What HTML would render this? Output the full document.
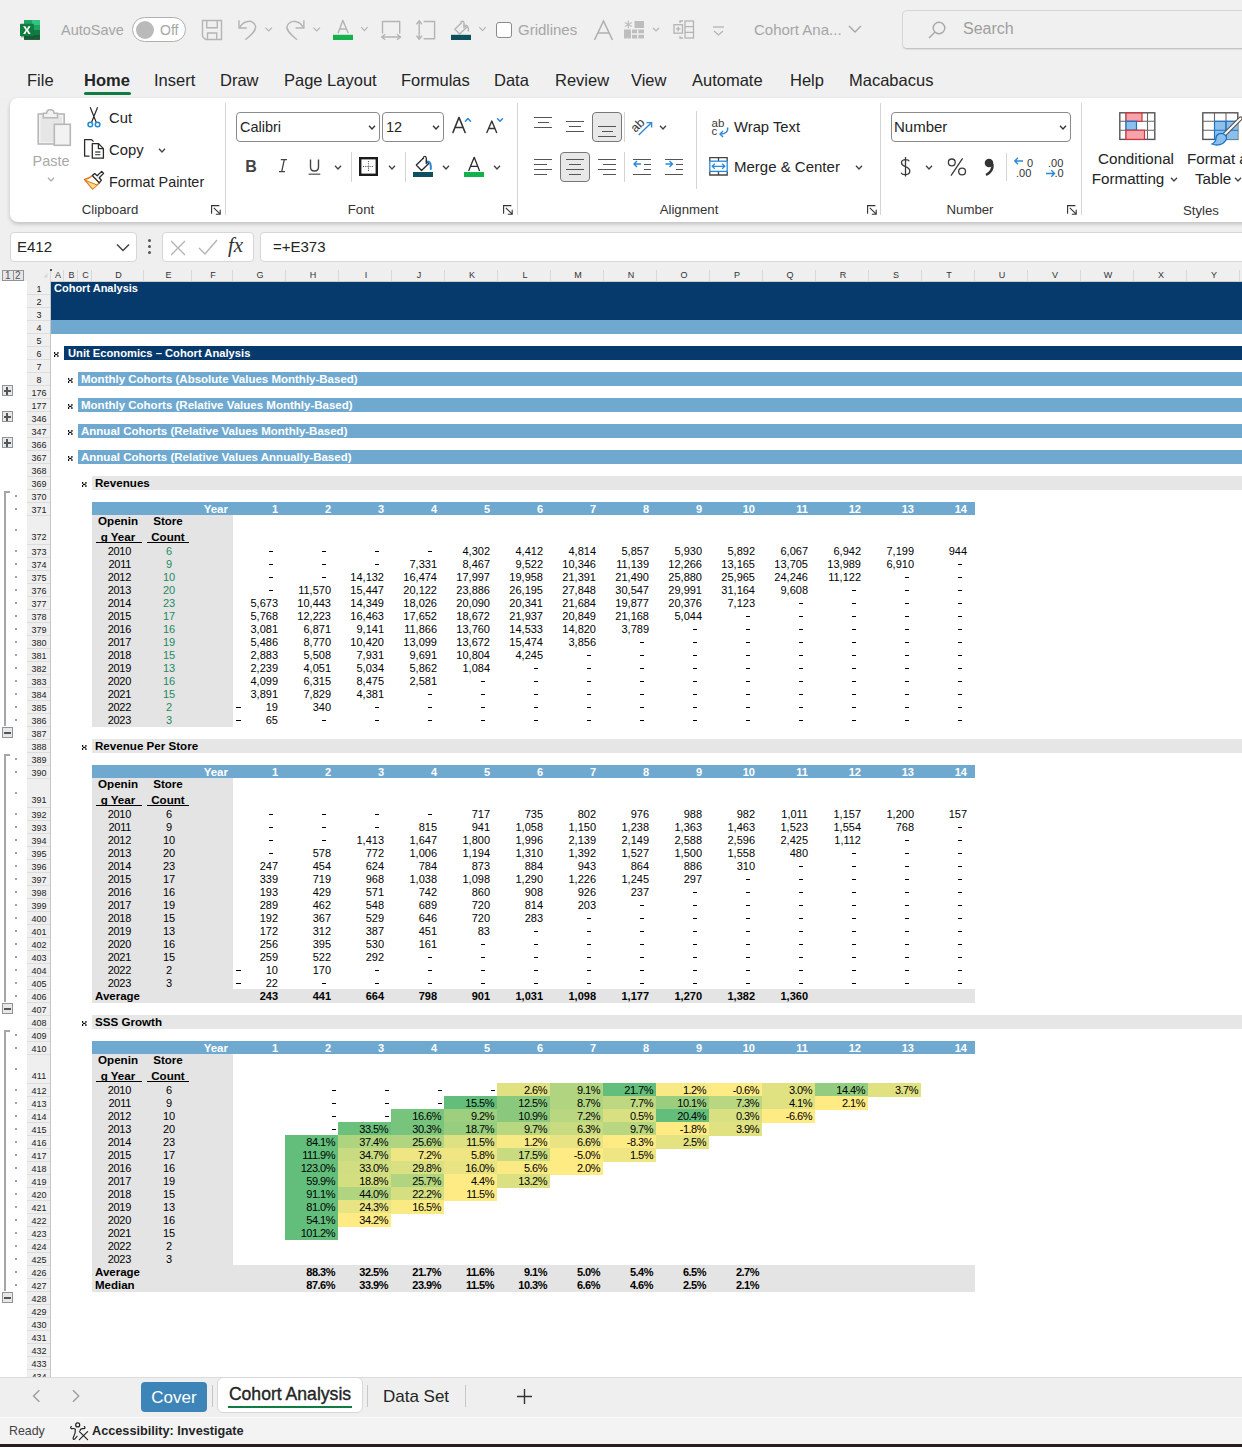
<!DOCTYPE html><html><head><meta charset="utf-8"><style>
html,body{margin:0;padding:0;}
body{width:1242px;height:1447px;overflow:hidden;position:relative;background:#efefef;font-family:"Liberation Sans", sans-serif;}
.t{position:absolute;white-space:nowrap;}
svg{position:absolute;overflow:visible;}
</style></head><body>
<div style="position:absolute;left:0px;top:0px;width:1242px;height:98px;background:#f0f0f0;"></div>
<svg style="left:15px;top:15px" width="30" height="30" viewBox="0 0 30 30">
<rect x="9" y="5" width="16" height="19.8" rx="1" fill="#185c37"/>
<rect x="9" y="5" width="16" height="15" fill="#21a366"/>
<rect x="17" y="5" width="8" height="5" fill="#33c481"/>
<rect x="17" y="15" width="8" height="5" fill="#107c41"/>
<rect x="9" y="20" width="16" height="4.8" fill="#185c37"/>
<rect x="6" y="9.5" width="13" height="13" fill="#0a4d2a" opacity="0.35"/>
<rect x="5" y="8.8" width="13.7" height="12.5" rx="0.8" fill="#107c41"/>
<path d="M8.1 11.2 H10.4 L11.9 14.1 L13.4 11.2 H15.6 L13.1 15.05 L15.6 18.9 H13.4 L11.9 16 L10.4 18.9 H8.1 L10.7 15.05 Z" fill="#fff"/>
</svg>
<div class="t" style="left:61px;top:21px;font-size:14.5px;font-weight:400;color:#a6a6a6;line-height:18px;">AutoSave</div>
<div style="position:absolute;left:132px;top:17px;width:54px;height:25px;border:1px solid #b0b0b0;border-radius:13px;background:#fff;box-sizing:border-box"></div>
<div style="position:absolute;left:136px;top:21px;width:17.5px;height:17.5px;border-radius:9px;background:#bababa"></div>
<div class="t" style="left:160px;top:22px;font-size:14px;font-weight:400;color:#a6a6a6;line-height:17px;">Off</div>
<svg style="left:195px;top:14px" width="130" height="32" viewBox="195 14 130 32" fill="none" stroke="#b4b4b4" stroke-width="1.4">
<path d="M202.5 20.5 H221.5 V39.5 H205.5 L202.5 36.5 Z"/><path d="M206.7 20.5 V27.8 H217.3 V20.5"/><path d="M207.5 39.5 V33 H216.7 V39.5"/>
<path d="M239 20.3 V28 H246.8"/><path d="M239.6 27.6 C243 21 252 18.5 255.3 25.5 C257 30 252 34.5 245.3 39.7"/>
<path d="M265.4 27.6 L268.7 30.9 L272 27.6" stroke-width="1.2"/>
<path d="M303.9 20.3 V28 H295.6"/><path d="M303.3 27.6 C300 21 291 18.5 287.2 25.8 C285.5 30 290.5 34.5 297.1 39.7"/>
<path d="M313.4 27.6 L316.7 30.9 L320 27.6" stroke-width="1.2"/></svg>
<svg style="left:325px;top:14px" width="170" height="32" viewBox="325 14 170 32" fill="none" stroke="#b4b4b4" stroke-width="1.4" stroke-linejoin="round">
<path d="M338 33.2 L342.8 20.4 L348.3 33.2 M339.6 29 H346.7"/><rect x="333" y="34.8" width="20" height="5.2" fill="#13b04b" stroke="none"/>
<path d="M361.2 27.2 L364.4 30.6 L367.6 27.2" stroke-width="1.2"/>
<path d="M382.5 33.5 V21.5 H399.7 V33.5"/><path d="M381.6 37 H400.6 M385.2 34.2 L381.6 37 L385.2 39.8 M397 34.2 L400.6 37 L397 39.8"/>
<path d="M423.6 21.5 H434.6 V38.7 H423.6"/><path d="M419.2 20.8 V39.2 M416.4 24.4 L419.2 20.8 L422 24.4 M416.4 35.6 L419.2 39.2 L422 35.6"/>
<path d="M460.8 23.4 L454.8 29.3 L459.8 34 L466.4 27.6 L464.2 25.5" stroke-linecap="round"/>
<path d="M460.8 23.4 C460.8 20.6 464 20.6 464 23.4 V27.8" stroke-linecap="round"/>
<path d="M465.8 25.2 C467.8 25.6 468.6 28 468.5 31" stroke-linecap="round"/>
<rect x="451" y="34.8" width="20" height="5.2" fill="#0d4f5c" stroke="none"/>
<path d="M479.3 27.2 L482.5 30.6 L485.7 27.2" stroke-width="1.2"/></svg>
<div style="position:absolute;left:496px;top:22px;width:16px;height:16px;border:1px solid #8a8a8a;border-radius:3px;background:#fff;box-sizing:border-box"></div>
<div class="t" style="left:518px;top:21px;font-size:15px;font-weight:400;color:#a6a6a6;line-height:18px;">Gridlines</div>
<svg style="left:593px;top:20px" width="21" height="21" viewBox="0 0 21 21" fill="none" stroke="#b0b0b0" stroke-width="1.6"><path d="M1.5 20 L10.5 1 L19.5 20 M5 13 H16"/></svg>
<svg style="left:624px;top:20px" width="40" height="20" viewBox="0 0 40 20">
<rect x="0" y="9.5" width="7" height="9" fill="#bdbdbd"/>
<rect x="10.5" y="1" width="9.5" height="7" fill="#bdbdbd"/>
<rect x="8" y="9.5" width="12" height="9" fill="#bdbdbd"/>
<path d="M13.7 9.5 V18.5 M8 14 H20" stroke="#efefef" stroke-width="1.3"/>
<path d="M4.3 0.5 V8.5 M0.8 2.5 L7.8 6.5 M7.8 2.5 L0.8 6.5" stroke="#bdbdbd" stroke-width="1.2"/>
<path d="M29 8 L32 11 L35 8" stroke="#b4b4b4" fill="none" stroke-width="1.2"/></svg>
<svg style="left:673px;top:20px" width="22" height="20" viewBox="0 0 22 20" fill="none" stroke="#b4b4b4" stroke-width="1.3">
<rect x="12" y="1" width="8.5" height="17"/><path d="M12 6.7 H20.5 M12 12.3 H20.5"/><path d="M10 1 H7 V3 M10 18 H7 V16"/>
<rect x="1" y="4.7" width="8.5" height="8.5"/><path d="M5.25 6.7 V11.2 M3 8.95 H7.5"/></svg>
<svg style="left:712px;top:25px" width="14" height="12" viewBox="0 0 14 12" fill="none" stroke="#b4b4b4" stroke-width="1.3">
<path d="M1 2 H12"/><path d="M2 6 L6.5 10 L11 6"/></svg>
<div class="t" style="left:754px;top:21px;font-size:15px;font-weight:400;color:#a6a6a6;line-height:18px;">Cohort Ana...</div>
<svg style="left:848px;top:24px" width="14" height="10" viewBox="0 0 14 10" fill="none" stroke="#a6a6a6" stroke-width="1.4"><path d="M1 2 L7 8 L13 2"/></svg>
<div style="position:absolute;left:902px;top:10px;width:400px;height:39px;border:1px solid #d6d6d6;border-bottom-color:#c4c4c4;border-radius:5px;background:#f0f0f0;box-sizing:border-box;box-shadow:0 1px 1px rgba(0,0,0,0.08)"></div>
<svg style="left:928px;top:21px" width="18" height="18" viewBox="0 0 18 18" fill="none" stroke="#a8a8a8" stroke-width="1.4">
<circle cx="11" cy="7" r="5.8"/><path d="M7 11 L1 17"/></svg>
<div class="t" style="left:963px;top:19px;font-size:16px;font-weight:400;color:#9e9e9e;line-height:20px;">Search</div>
<div class="t" style="left:27px;top:70px;font-size:16.5px;font-weight:400;color:#242424;line-height:20px;">File</div>
<div class="t" style="left:84px;top:70px;font-size:16.5px;font-weight:700;color:#242424;line-height:20px;">Home</div>
<div class="t" style="left:154px;top:70px;font-size:16.5px;font-weight:400;color:#242424;line-height:20px;">Insert</div>
<div class="t" style="left:220px;top:70px;font-size:16.5px;font-weight:400;color:#242424;line-height:20px;">Draw</div>
<div class="t" style="left:284px;top:70px;font-size:16.5px;font-weight:400;color:#242424;line-height:20px;">Page Layout</div>
<div class="t" style="left:401px;top:70px;font-size:16.5px;font-weight:400;color:#242424;line-height:20px;">Formulas</div>
<div class="t" style="left:494px;top:70px;font-size:16.5px;font-weight:400;color:#242424;line-height:20px;">Data</div>
<div class="t" style="left:555px;top:70px;font-size:16.5px;font-weight:400;color:#242424;line-height:20px;">Review</div>
<div class="t" style="left:631px;top:70px;font-size:16.5px;font-weight:400;color:#242424;line-height:20px;">View</div>
<div class="t" style="left:692px;top:70px;font-size:16.5px;font-weight:400;color:#242424;line-height:20px;">Automate</div>
<div class="t" style="left:790px;top:70px;font-size:16.5px;font-weight:400;color:#242424;line-height:20px;">Help</div>
<div class="t" style="left:849px;top:70px;font-size:16.5px;font-weight:400;color:#242424;line-height:20px;">Macabacus</div>
<div style="position:absolute;left:84px;top:92px;width:47px;height:3px;background:#107c41;border-radius:2px"></div>
<div style="position:absolute;left:10px;top:98px;width:1300px;height:124px;background:#fff;border-radius:8px;box-shadow:0 2px 4px rgba(0,0,0,0.2)"></div>
<svg style="left:30px;top:103px" width="45" height="46" viewBox="30 103 45 46" fill="none" stroke="#b8b8b8" stroke-width="1.6">
<rect x="38.2" y="114" width="26" height="30" fill="#f2f2f2"/>
<rect x="40.5" y="116.5" width="21.5" height="25.5" fill="#e6e6e6" stroke="none"/>
<path d="M43.3 117.8 V113.2 H46.6 C46.6 108.6 54 108.6 54 113.2 H57.5 V117.8 Z" fill="#f2f2f2"/>
<rect x="54.3" y="124.3" width="16" height="21" fill="#f2f2f2"/></svg>
<div class="t" style="left:-99px;width:300px;text-align:center;top:152px;font-size:14.4px;font-weight:400;color:#a8a8a8;line-height:18px;">Paste</div>
<svg style="left:47.0px;top:177px" width="8" height="5" viewBox="0 0 8 5" fill="none" stroke="#b0b0b0" stroke-width="1.3"><path d="M1 0.8 L4 4 L7 0.8"/></svg>
<svg style="left:84px;top:104px" width="20" height="26" viewBox="84 104 20 26" fill="none">
<path d="M90.2 107.2 L96.3 122.5 M97.6 107.2 L91.5 122.5" stroke="#2a2a2a" stroke-width="1.2"/>
<circle cx="90.3" cy="124.5" r="2.3" stroke="#1f87d6" stroke-width="1.5" fill="#fff"/>
<circle cx="97.6" cy="124.5" r="2.3" stroke="#1f87d6" stroke-width="1.5" fill="#fff"/></svg>
<div class="t" style="left:109px;top:109px;font-size:14.8px;font-weight:400;color:#242424;line-height:18px;">Cut</div>
<svg style="left:80px;top:135px" width="30" height="28" viewBox="80 135 30 28" fill="none" stroke="#2a2a2a" stroke-width="1.3" stroke-linejoin="round">
<path d="M89.5 156.2 H84.6 V139.6 H91.5 L93.5 141.6"/>
<path d="M92.3 143.6 H98.6 L103.4 148.6 V158.2 H92.3 Z" fill="#fff"/>
<path d="M98.4 143.8 V148.6 H103.2"/><path d="M95.2 152 H100.4 M95.2 154.6 H100.4" stroke="#555"/></svg>
<div class="t" style="left:109px;top:141px;font-size:14.8px;font-weight:400;color:#242424;line-height:18px;">Copy</div>
<svg style="left:158.0px;top:148px" width="8" height="5" viewBox="0 0 8 5" fill="none" stroke="#424242" stroke-width="1.3"><path d="M1 0.8 L4 4 L7 0.8"/></svg>
<svg style="left:80px;top:168px" width="30" height="24" viewBox="80 168 30 24" fill="none" stroke-linejoin="round">
<path d="M84.5 179.5 C88 179 90.5 177.5 92.4 175.6 L99.3 182.8 C97 185 94.5 187.5 92.6 189 Z" fill="#fff" stroke="#e07a1f" stroke-width="1.4"/>
<path d="M87 181.6 L96.8 185.4 L92.6 188.6 Z" fill="#f9dc84" stroke="none"/>
<path d="M85.6 180.5 L97 185" stroke="#e07a1f" stroke-width="1.2"/>
<path d="M92.4 175.6 L94.6 173.6 L97.2 175.8 L101.7 171.4 L103.6 173.4 L99.2 177.8 L101.4 180.2 L99.3 182.8 Z" fill="#fff" stroke="#2a2a2a" stroke-width="1.3"/></svg>
<div class="t" style="left:109px;top:173px;font-size:14.4px;font-weight:400;color:#242424;line-height:18px;">Format Painter</div>
<div class="t" style="left:-40px;width:300px;text-align:center;top:201px;font-size:13.2px;font-weight:400;color:#333;line-height:17px;">Clipboard</div>
<svg style="left:211px;top:205px" width="10" height="10" viewBox="0 0 10 10" fill="none" stroke="#333" stroke-width="1.1"><path d="M0.6 8.8 V0.6 H8.4"/><path d="M2.8 2.8 L9.2 9.2 M9.2 4.8 V9.2 H4.8"/></svg>
<div style="position:absolute;left:225px;top:103px;width:1px;height:112px;background:#d4d4d4;"></div>
<div style="position:absolute;left:236px;top:112px;width:144px;height:30px;border:1px solid #8a8a8a;border-radius:4px;box-sizing:border-box;background:#fff"></div>
<div class="t" style="left:240px;top:118px;font-size:14.5px;font-weight:400;color:#242424;line-height:18px;">Calibri</div>
<svg style="left:368.0px;top:125px" width="8" height="5" viewBox="0 0 8 5" fill="none" stroke="#333" stroke-width="1.3"><path d="M1 0.8 L4 4 L7 0.8"/></svg>
<div style="position:absolute;left:382px;top:112px;width:62px;height:30px;border:1px solid #8a8a8a;border-radius:4px;box-sizing:border-box;background:#fff"></div>
<div class="t" style="left:386px;top:118px;font-size:14.5px;font-weight:400;color:#242424;line-height:18px;">12</div>
<svg style="left:432.0px;top:125px" width="8" height="5" viewBox="0 0 8 5" fill="none" stroke="#333" stroke-width="1.3"><path d="M1 0.8 L4 4 L7 0.8"/></svg>
<svg style="left:445px;top:108px" width="65" height="32" viewBox="445 108 65 32" fill="none" stroke-linecap="round" stroke-linejoin="round">
<path d="M452.9 132.6 L459 117.4 L465.2 132.6 M455.5 127.6 H462.8" stroke="#333" stroke-width="1.5"/>
<path d="M465.4 121.3 L467.9 118.6 L470.5 121.3" stroke="#2b88d8" stroke-width="1.5"/>
<path d="M486.9 132.6 L491.8 121.1 L496.6 132.6 M488.8 128.5 H494.8" stroke="#333" stroke-width="1.4"/>
<path d="M497.6 118.7 L500 121.2 L502.5 118.7" stroke="#2b88d8" stroke-width="1.5"/></svg>
<div class="t" style="left:101px;width:300px;text-align:center;top:157px;font-size:16px;font-weight:700;color:#444;line-height:19px;">B</div>
<svg style="left:270px;top:150px" width="60" height="30" viewBox="270 150 60 30" fill="none" stroke="#444">
<path d="M280.8 159.6 H287 M279 171.6 H285 M284.3 159.6 L281.7 171.6" stroke-width="1.3"/>
<path d="M310.5 159.5 V167 C310.5 172.3 318.5 172.3 318.5 167 V159.5" stroke-width="1.4"/>
<path d="M308.6 174.2 H320.3" stroke="#666" stroke-width="1.4"/></svg>
<svg style="left:334.0px;top:165px" width="8" height="5" viewBox="0 0 8 5" fill="none" stroke="#424242" stroke-width="1.3"><path d="M1 0.8 L4 4 L7 0.8"/></svg>
<div style="position:absolute;left:351px;top:152px;width:1px;height:30px;background:#d4d4d4;"></div>
<svg style="left:359px;top:157px" width="19" height="19" viewBox="0 0 19 19" fill="none">
<rect x="1.2" y="1.2" width="16.6" height="16.6" stroke="#1a1a1a" stroke-width="2.4"/>
<path d="M9.5 4 V15 M4 9.5 H15" stroke="#555" stroke-width="1.1" stroke-dasharray="1.1 1.1"/></svg>
<svg style="left:388.0px;top:165px" width="8" height="5" viewBox="0 0 8 5" fill="none" stroke="#424242" stroke-width="1.3"><path d="M1 0.8 L4 4 L7 0.8"/></svg>
<div style="position:absolute;left:405px;top:152px;width:1px;height:30px;background:#d4d4d4;"></div>
<svg style="left:405px;top:150px" width="90" height="30" viewBox="405 150 90 30" fill="none" stroke-linejoin="round" stroke-linecap="round">
<path d="M423.3 158.3 L416.3 165 L421.5 170.5 L428.8 163.5 L426.3 161" stroke="#2a2a2a" stroke-width="1.3" fill="#fff"/>
<path d="M423.3 158.3 C423.3 155.8 426.3 155.8 426.3 158.3 L426.3 163.6" stroke="#2a2a2a" stroke-width="1.3"/>
<path d="M428 161.6 C430.3 161.6 431 164.5 430.8 169" stroke="#2b88d8" stroke-width="2"/>
<rect x="413" y="172" width="20" height="5" fill="#0c5062" stroke="none"/>
<path d="M468.8 170.5 L474.2 157.3 L479.4 170.5 M470.6 166.3 H477.6" stroke="#2a2a2a" stroke-width="1.3"/>
<rect x="464" y="172" width="20" height="5" fill="#12b14c" stroke="none"/></svg>
<svg style="left:442.0px;top:165px" width="8" height="5" viewBox="0 0 8 5" fill="none" stroke="#424242" stroke-width="1.3"><path d="M1 0.8 L4 4 L7 0.8"/></svg>
<svg style="left:493.0px;top:165px" width="8" height="5" viewBox="0 0 8 5" fill="none" stroke="#424242" stroke-width="1.3"><path d="M1 0.8 L4 4 L7 0.8"/></svg>
<div class="t" style="left:211px;width:300px;text-align:center;top:201px;font-size:13.2px;font-weight:400;color:#333;line-height:17px;">Font</div>
<svg style="left:503px;top:205px" width="10" height="10" viewBox="0 0 10 10" fill="none" stroke="#333" stroke-width="1.1"><path d="M0.6 8.8 V0.6 H8.4"/><path d="M2.8 2.8 L9.2 9.2 M9.2 4.8 V9.2 H4.8"/></svg>
<div style="position:absolute;left:517px;top:103px;width:1px;height:112px;background:#d4d4d4;"></div>
<div style="position:absolute;left:534px;top:117px;width:18px;height:1.4px;background:#555"></div>
<div style="position:absolute;left:537.5px;top:122px;width:11.5px;height:1.4px;background:#555"></div>
<div style="position:absolute;left:534px;top:127px;width:18px;height:1.4px;background:#555"></div>
<div style="position:absolute;left:566px;top:121px;width:18px;height:1.4px;background:#555"></div>
<div style="position:absolute;left:569px;top:126px;width:12px;height:1.4px;background:#555"></div>
<div style="position:absolute;left:566px;top:131px;width:18px;height:1.4px;background:#555"></div>
<div style="position:absolute;left:592px;top:112px;width:30px;height:30px;border:1px solid #777;border-radius:4px;background:#e8e8e8;box-sizing:border-box"></div>
<div style="position:absolute;left:598px;top:126px;width:18px;height:1.4px;background:#555"></div>
<div style="position:absolute;left:601.5px;top:131px;width:11.5px;height:1.4px;background:#555"></div>
<div style="position:absolute;left:598px;top:136px;width:18px;height:1.4px;background:#555"></div>
<div style="position:absolute;left:624px;top:112px;width:1px;height:30px;background:#d4d4d4;"></div>
<svg style="left:625px;top:108px" width="35" height="32" viewBox="625 108 35 32" fill="none">
<text x="631" y="130" font-size="12.5" font-family="Liberation Sans" fill="#3a3a3a" transform="rotate(-45 637 126)">ab</text>
<path d="M638.7 135 L651.4 122.8 M646.6 122.6 H651.6 V127.6" stroke="#2b88d8" stroke-width="1.4"/></svg>
<svg style="left:659.0px;top:125px" width="8" height="5" viewBox="0 0 8 5" fill="none" stroke="#424242" stroke-width="1.3"><path d="M1 0.8 L4 4 L7 0.8"/></svg>
<div style="position:absolute;left:696px;top:111px;width:1px;height:78px;background:#d4d4d4;"></div>
<svg style="left:705px;top:108px" width="30" height="32" viewBox="705 108 30 32" fill="none">
<text x="711.5" y="126.5" font-size="11.5" font-family="Liberation Sans" fill="#3a3a3a">ab</text>
<text x="711.5" y="135" font-size="11.5" font-family="Liberation Sans" fill="#3a3a3a">c</text>
<path d="M727.5 127.5 C728.5 131.5 725.5 134 720.5 134" stroke="#2b88d8" stroke-width="1.4"/>
<path d="M723 131 L720 134 L723 137" stroke="#2b88d8" stroke-width="1.4"/></svg>
<div class="t" style="left:734px;top:118px;font-size:14.8px;font-weight:400;color:#242424;line-height:18px;">Wrap Text</div>
<div style="position:absolute;left:534px;top:158.5px;width:18px;height:1.4px;background:#555"></div>
<div style="position:absolute;left:534px;top:163.5px;width:13px;height:1.4px;background:#555"></div>
<div style="position:absolute;left:534px;top:168.5px;width:18px;height:1.4px;background:#555"></div>
<div style="position:absolute;left:534px;top:173.5px;width:13px;height:1.4px;background:#555"></div>
<div style="position:absolute;left:560px;top:152px;width:30px;height:30px;border:1px solid #777;border-radius:4px;background:#e8e8e8;box-sizing:border-box"></div>
<div style="position:absolute;left:566px;top:158.5px;width:18px;height:1.4px;background:#555"></div>
<div style="position:absolute;left:569px;top:163.5px;width:12px;height:1.4px;background:#555"></div>
<div style="position:absolute;left:566px;top:168.5px;width:18px;height:1.4px;background:#555"></div>
<div style="position:absolute;left:569px;top:173.5px;width:12px;height:1.4px;background:#555"></div>
<div style="position:absolute;left:598px;top:158.5px;width:18px;height:1.4px;background:#555"></div>
<div style="position:absolute;left:603px;top:163.5px;width:13px;height:1.4px;background:#555"></div>
<div style="position:absolute;left:598px;top:168.5px;width:18px;height:1.4px;background:#555"></div>
<div style="position:absolute;left:603px;top:173.5px;width:13px;height:1.4px;background:#555"></div>
<div style="position:absolute;left:624px;top:152px;width:1px;height:30px;background:#d4d4d4;"></div>
<div style="position:absolute;left:633px;top:158.5px;width:18px;height:1.4px;background:#555"></div>
<div style="position:absolute;left:643.5px;top:163.5px;width:7.5px;height:1.4px;background:#555"></div>
<div style="position:absolute;left:643.5px;top:168.5px;width:7.5px;height:1.4px;background:#555"></div>
<div style="position:absolute;left:633px;top:173.5px;width:18px;height:1.4px;background:#555"></div>
<svg style="left:633px;top:160px" width="10" height="8" viewBox="0 0 10 8" fill="none" stroke="#2b88d8" stroke-width="1.4"><path d="M8 4 H1 M4 1 L1 4 L4 7"/></svg>
<div style="position:absolute;left:665px;top:158.5px;width:18px;height:1.4px;background:#555"></div>
<div style="position:absolute;left:675.5px;top:163.5px;width:7.5px;height:1.4px;background:#555"></div>
<div style="position:absolute;left:675.5px;top:168.5px;width:7.5px;height:1.4px;background:#555"></div>
<div style="position:absolute;left:665px;top:173.5px;width:18px;height:1.4px;background:#555"></div>
<svg style="left:665px;top:160px" width="10" height="8" viewBox="0 0 10 8" fill="none" stroke="#2b88d8" stroke-width="1.4"><path d="M0.5 4 H7.5 M4.5 1 L7.5 4 L4.5 7"/></svg>
<svg style="left:700px;top:150px" width="35" height="32" viewBox="700 150 35 32" fill="none">
<path d="M709.8 161 V157.7 H727.2 V161 M709.8 171.5 V175 H727.2 V171.5 M718.5 157.7 V161 M718.5 171.5 V175" stroke="#444" stroke-width="1.3"/>
<rect x="709.8" y="161.2" width="17.4" height="10.2" fill="#fff" stroke="#2b88d8" stroke-width="1.3"/>
<path d="M712.2 166.3 H724.8 M714.8 163.8 L712.2 166.3 L714.8 168.8 M722.2 163.8 L724.8 166.3 L722.2 168.8" stroke="#2b88d8" stroke-width="1.3"/></svg>
<div class="t" style="left:734px;top:158px;font-size:15px;font-weight:400;color:#242424;line-height:18px;">Merge &amp; Center</div>
<svg style="left:855.0px;top:165px" width="8" height="5" viewBox="0 0 8 5" fill="none" stroke="#424242" stroke-width="1.3"><path d="M1 0.8 L4 4 L7 0.8"/></svg>
<div class="t" style="left:539px;width:300px;text-align:center;top:201px;font-size:13.2px;font-weight:400;color:#333;line-height:17px;">Alignment</div>
<svg style="left:867px;top:205px" width="10" height="10" viewBox="0 0 10 10" fill="none" stroke="#333" stroke-width="1.1"><path d="M0.6 8.8 V0.6 H8.4"/><path d="M2.8 2.8 L9.2 9.2 M9.2 4.8 V9.2 H4.8"/></svg>
<div style="position:absolute;left:880px;top:103px;width:1px;height:112px;background:#d4d4d4;"></div>
<div style="position:absolute;left:891px;top:112px;width:180px;height:30px;border:1px solid #8a8a8a;border-radius:4px;box-sizing:border-box;background:#fff"></div>
<div class="t" style="left:894px;top:118px;font-size:15px;font-weight:400;color:#242424;line-height:18px;">Number</div>
<svg style="left:1059.0px;top:125px" width="8" height="5" viewBox="0 0 8 5" fill="none" stroke="#333" stroke-width="1.3"><path d="M1 0.8 L4 4 L7 0.8"/></svg>
<svg style="left:890px;top:150px" width="90" height="30" viewBox="890 150 90 30" fill="none" stroke="#3a3a3a" stroke-width="1.3">
<path d="M909.3 161.3 C908 159 901.5 158.8 901.5 163 C901.5 167.2 909.8 166 909.8 171 C909.8 175.5 902.5 175.5 901 172.8 M905.5 157 V176.6"/>
<circle cx="951.8" cy="162.4" r="3.4"/><circle cx="962.1" cy="171.5" r="3.4"/><path d="M962.6 158.4 L951 175.7"/></svg>
<svg style="left:925.0px;top:165px" width="8" height="5" viewBox="0 0 8 5" fill="none" stroke="#424242" stroke-width="1.3"><path d="M1 0.8 L4 4 L7 0.8"/></svg>
<svg style="left:984px;top:158px" width="11" height="18" viewBox="0 0 11 18"><circle cx="5" cy="5" r="4.3" fill="#333"/><path d="M8.5 6 C9 11 6 15 2 17" stroke="#333" stroke-width="2.4" fill="none"/></svg>
<div style="position:absolute;left:1006px;top:153px;width:1px;height:28px;background:#d4d4d4;"></div>
<svg style="left:1013px;top:156px" width="22" height="22" viewBox="0 0 22 22" fill="none">
<path d="M10 5 H1.8 M5 1.8 L1.8 5 L5 8.2" stroke="#2b88d8" stroke-width="1.4"/>
<text x="14" y="10.5" font-size="11" font-family="Liberation Sans" fill="#333">0</text>
<text x="3" y="20.5" font-size="11" font-family="Liberation Sans" fill="#333">.00</text></svg>
<svg style="left:1045px;top:156px" width="22" height="22" viewBox="0 0 22 22" fill="none">
<text x="3" y="10.5" font-size="11" font-family="Liberation Sans" fill="#333">.00</text>
<path d="M1 17.5 H9.5 M6.3 14.3 L9.5 17.5 L6.3 20.7" stroke="#2b88d8" stroke-width="1.4"/>
<text x="9.5" y="20.5" font-size="11" font-family="Liberation Sans" fill="#333">.0</text></svg>
<div class="t" style="left:820px;width:300px;text-align:center;top:201px;font-size:13.2px;font-weight:400;color:#333;line-height:17px;">Number</div>
<svg style="left:1067px;top:205px" width="10" height="10" viewBox="0 0 10 10" fill="none" stroke="#333" stroke-width="1.1"><path d="M0.6 8.8 V0.6 H8.4"/><path d="M2.8 2.8 L9.2 9.2 M9.2 4.8 V9.2 H4.8"/></svg>
<div style="position:absolute;left:1081px;top:103px;width:1px;height:112px;background:#d4d4d4;"></div>
<svg style="left:1119px;top:112px" width="37" height="29" viewBox="0 0 37 29" fill="none">
<rect x="0.8" y="0.8" width="35" height="26.6" fill="#fff" stroke="#555" stroke-width="1.4"/>
<path d="M7 1 V27.5 M28.5 1 V27.5 M1 9.3 H36 M1 18.2 H36" stroke="#666" stroke-width="1.1"/>
<rect x="7" y="1" width="16" height="8.3" fill="#f6a3ab" stroke="#d13438" stroke-width="1.2"/>
<rect x="7" y="9.3" width="10.5" height="8.9" fill="#8cc0ec" stroke="#1a73c8" stroke-width="1.2"/>
<rect x="7" y="18.2" width="18.5" height="9.2" fill="#f6a3ab" stroke="#d13438" stroke-width="1.2"/></svg>
<div class="t" style="left:986px;width:300px;text-align:center;top:150px;font-size:15.2px;font-weight:400;color:#242424;line-height:18px;">Conditional</div>
<div class="t" style="left:978px;width:300px;text-align:center;top:170px;font-size:15.2px;font-weight:400;color:#242424;line-height:18px;">Formatting</div>
<svg style="left:1170.0px;top:177px" width="8" height="5" viewBox="0 0 8 5" fill="none" stroke="#424242" stroke-width="1.3"><path d="M1 0.8 L4 4 L7 0.8"/></svg>
<svg style="left:1202px;top:112px" width="42" height="36" viewBox="0 0 42 36" fill="none">
<rect x="0.8" y="0.8" width="35" height="26.6" fill="#fff" stroke="#555" stroke-width="1.4"/>
<rect x="12.5" y="9.3" width="23.3" height="18.1" fill="#8cc0ec"/>
<path d="M12.5 1 V27.5 M24 1 V27.5 M1 9.3 H36 M1 18.2 H12.5" stroke="#666" stroke-width="1.1"/>
<path d="M12.5 9.3 V27.5 M24 9.3 V27.5 M12.5 18.2 H36 M12.5 9.3 H36" stroke="#1a73c8" stroke-width="1.1"/>
<path d="M38.5 6.5 L21 24" stroke="#555" stroke-width="4.2" stroke-linecap="round"/>
<path d="M38.5 6.5 L21 24" stroke="#fff" stroke-width="2" stroke-linecap="round"/>
<path d="M22.5 22.5 C19 20 14 22 14 26 C14 29 12 31 10 32 C15 34 21 33 24 28 C25 26 24.5 24 22.5 22.5 Z" fill="#8cc0ec" stroke="#1a73c8" stroke-width="1.3"/></svg>
<div class="t" style="left:1187px;top:150px;font-size:15.2px;font-weight:400;color:#242424;line-height:18px;">Format a</div>
<div class="t" style="left:1195px;top:170px;font-size:15.2px;font-weight:400;color:#242424;line-height:18px;">Table</div>
<svg style="left:1234.0px;top:177px" width="8" height="5" viewBox="0 0 8 5" fill="none" stroke="#424242" stroke-width="1.3"><path d="M1 0.8 L4 4 L7 0.8"/></svg>
<div class="t" style="left:1051px;width:300px;text-align:center;top:202px;font-size:13.2px;font-weight:400;color:#333;line-height:17px;">Styles</div>
<div style="position:absolute;left:10px;top:232px;width:127px;height:30px;border:1px solid #d6d6d6;border-radius:4px;background:#fff;box-sizing:border-box"></div>
<div class="t" style="left:17px;top:237px;font-size:15px;font-weight:400;color:#242424;line-height:19px;">E412</div>
<svg style="left:116px;top:243px" width="14" height="9" viewBox="0 0 14 9" fill="none" stroke="#424242" stroke-width="1.5"><path d="M1 1.5 L7 7.5 L13 1.5"/></svg>
<div style="position:absolute;left:148px;top:239px;width:3px;height:3px;background:#555;border-radius:2px"></div>
<div style="position:absolute;left:148px;top:245px;width:3px;height:3px;background:#555;border-radius:2px"></div>
<div style="position:absolute;left:148px;top:251px;width:3px;height:3px;background:#555;border-radius:2px"></div>
<div style="position:absolute;left:162px;top:232px;width:92px;height:30px;border:1px solid #d6d6d6;border-radius:4px;background:#fff;box-sizing:border-box"></div>
<svg style="left:170px;top:240px" width="16" height="16" viewBox="0 0 16 16" fill="none" stroke="#b4b4b4" stroke-width="1.4"><path d="M1 1 L15 15 M15 1 L1 15"/></svg>
<svg style="left:198px;top:239px" width="20" height="16" viewBox="0 0 20 16" fill="none" stroke="#b4b4b4" stroke-width="1.4"><path d="M1 9 L7 15 L19 1"/></svg>
<div class="t" style="left:228px;top:233px;font-size:21px;font-weight:400;color:#333;line-height:24px;font-family:'Liberation Serif',serif;font-style:italic">fx</div>
<div style="position:absolute;left:260px;top:232px;width:1000px;height:30px;border:1px solid #d6d6d6;border-radius:4px;background:#fff;box-sizing:border-box"></div>
<div class="t" style="left:273px;top:237px;font-size:15px;font-weight:400;color:#242424;line-height:19px;">=+E373</div>
<div style="position:absolute;left:0px;top:281px;width:1242px;height:1096px;background:#ffffff;"></div>
<div style="position:absolute;left:0px;top:262px;width:1242px;height:19px;background:#efefef;"></div>
<div style="position:absolute;left:27px;top:281px;width:1215px;height:1px;background:#d4d4d4;"></div>
<div style="position:absolute;left:27px;top:281px;width:23px;height:1096px;background:#efefef;"></div>
<div style="position:absolute;left:50px;top:270px;width:1px;height:1107px;background:#c6c6c6;"></div>
<div style="position:absolute;left:50px;top:270px;width:1px;height:11px;background:#d9d9d9;"></div>
<div class="t" style="left:-92.0px;width:300px;text-align:center;top:270px;font-size:9px;font-weight:400;color:#333;line-height:10px;">A</div>
<div style="position:absolute;left:63px;top:270px;width:1px;height:11px;background:#d9d9d9;"></div>
<div class="t" style="left:-78.5px;width:300px;text-align:center;top:270px;font-size:9px;font-weight:400;color:#333;line-height:10px;">B</div>
<div style="position:absolute;left:77px;top:270px;width:1px;height:11px;background:#d9d9d9;"></div>
<div class="t" style="left:-64.5px;width:300px;text-align:center;top:270px;font-size:9px;font-weight:400;color:#333;line-height:10px;">C</div>
<div style="position:absolute;left:91px;top:270px;width:1px;height:11px;background:#d9d9d9;"></div>
<div class="t" style="left:-31.5px;width:300px;text-align:center;top:270px;font-size:9px;font-weight:400;color:#333;line-height:10px;">D</div>
<div style="position:absolute;left:143px;top:270px;width:1px;height:11px;background:#d9d9d9;"></div>
<div class="t" style="left:18.5px;width:300px;text-align:center;top:270px;font-size:9px;font-weight:400;color:#333;line-height:10px;">E</div>
<div style="position:absolute;left:191px;top:270px;width:1px;height:11px;background:#d9d9d9;"></div>
<div class="t" style="left:63.0px;width:300px;text-align:center;top:270px;font-size:9px;font-weight:400;color:#333;line-height:10px;">F</div>
<div style="position:absolute;left:232px;top:270px;width:1px;height:11px;background:#d9d9d9;"></div>
<div class="t" style="left:110.0px;width:300px;text-align:center;top:270px;font-size:9px;font-weight:400;color:#333;line-height:10px;">G</div>
<div style="position:absolute;left:285px;top:270px;width:1px;height:11px;background:#d9d9d9;"></div>
<div class="t" style="left:163.0px;width:300px;text-align:center;top:270px;font-size:9px;font-weight:400;color:#333;line-height:10px;">H</div>
<div style="position:absolute;left:338px;top:270px;width:1px;height:11px;background:#d9d9d9;"></div>
<div class="t" style="left:216.0px;width:300px;text-align:center;top:270px;font-size:9px;font-weight:400;color:#333;line-height:10px;">I</div>
<div style="position:absolute;left:391px;top:270px;width:1px;height:11px;background:#d9d9d9;"></div>
<div class="t" style="left:269.0px;width:300px;text-align:center;top:270px;font-size:9px;font-weight:400;color:#333;line-height:10px;">J</div>
<div style="position:absolute;left:444px;top:270px;width:1px;height:11px;background:#d9d9d9;"></div>
<div class="t" style="left:322.0px;width:300px;text-align:center;top:270px;font-size:9px;font-weight:400;color:#333;line-height:10px;">K</div>
<div style="position:absolute;left:497px;top:270px;width:1px;height:11px;background:#d9d9d9;"></div>
<div class="t" style="left:375.0px;width:300px;text-align:center;top:270px;font-size:9px;font-weight:400;color:#333;line-height:10px;">L</div>
<div style="position:absolute;left:550px;top:270px;width:1px;height:11px;background:#d9d9d9;"></div>
<div class="t" style="left:428.0px;width:300px;text-align:center;top:270px;font-size:9px;font-weight:400;color:#333;line-height:10px;">M</div>
<div style="position:absolute;left:603px;top:270px;width:1px;height:11px;background:#d9d9d9;"></div>
<div class="t" style="left:481.0px;width:300px;text-align:center;top:270px;font-size:9px;font-weight:400;color:#333;line-height:10px;">N</div>
<div style="position:absolute;left:656px;top:270px;width:1px;height:11px;background:#d9d9d9;"></div>
<div class="t" style="left:534.0px;width:300px;text-align:center;top:270px;font-size:9px;font-weight:400;color:#333;line-height:10px;">O</div>
<div style="position:absolute;left:709px;top:270px;width:1px;height:11px;background:#d9d9d9;"></div>
<div class="t" style="left:587.0px;width:300px;text-align:center;top:270px;font-size:9px;font-weight:400;color:#333;line-height:10px;">P</div>
<div style="position:absolute;left:762px;top:270px;width:1px;height:11px;background:#d9d9d9;"></div>
<div class="t" style="left:640.0px;width:300px;text-align:center;top:270px;font-size:9px;font-weight:400;color:#333;line-height:10px;">Q</div>
<div style="position:absolute;left:815px;top:270px;width:1px;height:11px;background:#d9d9d9;"></div>
<div class="t" style="left:693.0px;width:300px;text-align:center;top:270px;font-size:9px;font-weight:400;color:#333;line-height:10px;">R</div>
<div style="position:absolute;left:868px;top:270px;width:1px;height:11px;background:#d9d9d9;"></div>
<div class="t" style="left:746.0px;width:300px;text-align:center;top:270px;font-size:9px;font-weight:400;color:#333;line-height:10px;">S</div>
<div style="position:absolute;left:921px;top:270px;width:1px;height:11px;background:#d9d9d9;"></div>
<div class="t" style="left:799.0px;width:300px;text-align:center;top:270px;font-size:9px;font-weight:400;color:#333;line-height:10px;">T</div>
<div style="position:absolute;left:974px;top:270px;width:1px;height:11px;background:#d9d9d9;"></div>
<div class="t" style="left:852.0px;width:300px;text-align:center;top:270px;font-size:9px;font-weight:400;color:#333;line-height:10px;">U</div>
<div style="position:absolute;left:1027px;top:270px;width:1px;height:11px;background:#d9d9d9;"></div>
<div class="t" style="left:905.0px;width:300px;text-align:center;top:270px;font-size:9px;font-weight:400;color:#333;line-height:10px;">V</div>
<div style="position:absolute;left:1080px;top:270px;width:1px;height:11px;background:#d9d9d9;"></div>
<div class="t" style="left:958.0px;width:300px;text-align:center;top:270px;font-size:9px;font-weight:400;color:#333;line-height:10px;">W</div>
<div style="position:absolute;left:1133px;top:270px;width:1px;height:11px;background:#d9d9d9;"></div>
<div class="t" style="left:1011.0px;width:300px;text-align:center;top:270px;font-size:9px;font-weight:400;color:#333;line-height:10px;">X</div>
<div style="position:absolute;left:1186px;top:270px;width:1px;height:11px;background:#d9d9d9;"></div>
<div class="t" style="left:1064.0px;width:300px;text-align:center;top:270px;font-size:9px;font-weight:400;color:#333;line-height:10px;">Y</div>
<div style="position:absolute;left:1239px;top:270px;width:1px;height:11px;background:#d9d9d9;"></div>
<div class="t" style="left:1117.0px;width:300px;text-align:center;top:270px;font-size:9px;font-weight:400;color:#333;line-height:10px;">Z</div>
<svg style="left:43px;top:273px" width="5" height="5"><path d="M4.5 0 L4.5 4.5 L0 4.5 Z" fill="#d8d8d8"/></svg>
<div style="position:absolute;left:50px;top:269px;width:2px;height:2px;background:#222;border-radius:1px"></div>
<div style="position:absolute;left:2px;top:270px;width:20px;height:9px;border:1px solid #8d949a;background:#e6e6e6"></div>
<div style="position:absolute;left:13px;top:270px;width:1px;height:11px;background:#8d949a;"></div>
<div class="t" style="left:5px;top:270px;font-size:10px;font-weight:400;color:#555;line-height:11px;">1</div>
<div class="t" style="left:15px;top:270px;font-size:10px;font-weight:400;color:#555;line-height:11px;">2</div>
<div style="position:absolute;left:27px;top:294px;width:23px;height:1px;background:#dddddd;"></div>
<div class="t" style="left:-111px;width:300px;text-align:center;top:284px;font-size:9px;font-weight:400;color:#222;line-height:11px;">1</div>
<div style="position:absolute;left:27px;top:307px;width:23px;height:1px;background:#dddddd;"></div>
<div class="t" style="left:-111px;width:300px;text-align:center;top:297px;font-size:9px;font-weight:400;color:#222;line-height:11px;">2</div>
<div style="position:absolute;left:27px;top:320px;width:23px;height:1px;background:#dddddd;"></div>
<div class="t" style="left:-111px;width:300px;text-align:center;top:310px;font-size:9px;font-weight:400;color:#222;line-height:11px;">3</div>
<div style="position:absolute;left:27px;top:333px;width:23px;height:1px;background:#dddddd;"></div>
<div class="t" style="left:-111px;width:300px;text-align:center;top:323px;font-size:9px;font-weight:400;color:#222;line-height:11px;">4</div>
<div style="position:absolute;left:27px;top:346px;width:23px;height:1px;background:#dddddd;"></div>
<div class="t" style="left:-111px;width:300px;text-align:center;top:336px;font-size:9px;font-weight:400;color:#222;line-height:11px;">5</div>
<div style="position:absolute;left:27px;top:359px;width:23px;height:1px;background:#dddddd;"></div>
<div class="t" style="left:-111px;width:300px;text-align:center;top:349px;font-size:9px;font-weight:400;color:#222;line-height:11px;">6</div>
<div style="position:absolute;left:27px;top:372px;width:23px;height:1px;background:#dddddd;"></div>
<div class="t" style="left:-111px;width:300px;text-align:center;top:362px;font-size:9px;font-weight:400;color:#222;line-height:11px;">7</div>
<div style="position:absolute;left:27px;top:385px;width:23px;height:1px;background:#dddddd;"></div>
<div class="t" style="left:-111px;width:300px;text-align:center;top:375px;font-size:9px;font-weight:400;color:#222;line-height:11px;">8</div>
<div style="position:absolute;left:27px;top:398px;width:23px;height:1px;background:#dddddd;"></div>
<div class="t" style="left:-111px;width:300px;text-align:center;top:388px;font-size:9px;font-weight:400;color:#222;line-height:11px;">176</div>
<div style="position:absolute;left:27px;top:411px;width:23px;height:1px;background:#dddddd;"></div>
<div class="t" style="left:-111px;width:300px;text-align:center;top:401px;font-size:9px;font-weight:400;color:#222;line-height:11px;">177</div>
<div style="position:absolute;left:27px;top:424px;width:23px;height:1px;background:#dddddd;"></div>
<div class="t" style="left:-111px;width:300px;text-align:center;top:414px;font-size:9px;font-weight:400;color:#222;line-height:11px;">346</div>
<div style="position:absolute;left:27px;top:437px;width:23px;height:1px;background:#dddddd;"></div>
<div class="t" style="left:-111px;width:300px;text-align:center;top:427px;font-size:9px;font-weight:400;color:#222;line-height:11px;">347</div>
<div style="position:absolute;left:27px;top:450px;width:23px;height:1px;background:#dddddd;"></div>
<div class="t" style="left:-111px;width:300px;text-align:center;top:440px;font-size:9px;font-weight:400;color:#222;line-height:11px;">366</div>
<div style="position:absolute;left:27px;top:463px;width:23px;height:1px;background:#dddddd;"></div>
<div class="t" style="left:-111px;width:300px;text-align:center;top:453px;font-size:9px;font-weight:400;color:#222;line-height:11px;">367</div>
<div style="position:absolute;left:27px;top:476px;width:23px;height:1px;background:#dddddd;"></div>
<div class="t" style="left:-111px;width:300px;text-align:center;top:466px;font-size:9px;font-weight:400;color:#222;line-height:11px;">368</div>
<div style="position:absolute;left:27px;top:489px;width:23px;height:1px;background:#dddddd;"></div>
<div class="t" style="left:-111px;width:300px;text-align:center;top:479px;font-size:9px;font-weight:400;color:#222;line-height:11px;">369</div>
<div style="position:absolute;left:27px;top:502px;width:23px;height:1px;background:#dddddd;"></div>
<div class="t" style="left:-111px;width:300px;text-align:center;top:492px;font-size:9px;font-weight:400;color:#222;line-height:11px;">370</div>
<div style="position:absolute;left:27px;top:515px;width:23px;height:1px;background:#dddddd;"></div>
<div class="t" style="left:-111px;width:300px;text-align:center;top:505px;font-size:9px;font-weight:400;color:#222;line-height:11px;">371</div>
<div style="position:absolute;left:27px;top:544px;width:23px;height:1px;background:#dddddd;"></div>
<div class="t" style="left:-111px;width:300px;text-align:center;top:532px;font-size:9px;font-weight:400;color:#222;line-height:11px;">372</div>
<div style="position:absolute;left:27px;top:557px;width:23px;height:1px;background:#dddddd;"></div>
<div class="t" style="left:-111px;width:300px;text-align:center;top:547px;font-size:9px;font-weight:400;color:#222;line-height:11px;">373</div>
<div style="position:absolute;left:27px;top:570px;width:23px;height:1px;background:#dddddd;"></div>
<div class="t" style="left:-111px;width:300px;text-align:center;top:560px;font-size:9px;font-weight:400;color:#222;line-height:11px;">374</div>
<div style="position:absolute;left:27px;top:583px;width:23px;height:1px;background:#dddddd;"></div>
<div class="t" style="left:-111px;width:300px;text-align:center;top:573px;font-size:9px;font-weight:400;color:#222;line-height:11px;">375</div>
<div style="position:absolute;left:27px;top:596px;width:23px;height:1px;background:#dddddd;"></div>
<div class="t" style="left:-111px;width:300px;text-align:center;top:586px;font-size:9px;font-weight:400;color:#222;line-height:11px;">376</div>
<div style="position:absolute;left:27px;top:609px;width:23px;height:1px;background:#dddddd;"></div>
<div class="t" style="left:-111px;width:300px;text-align:center;top:599px;font-size:9px;font-weight:400;color:#222;line-height:11px;">377</div>
<div style="position:absolute;left:27px;top:622px;width:23px;height:1px;background:#dddddd;"></div>
<div class="t" style="left:-111px;width:300px;text-align:center;top:612px;font-size:9px;font-weight:400;color:#222;line-height:11px;">378</div>
<div style="position:absolute;left:27px;top:635px;width:23px;height:1px;background:#dddddd;"></div>
<div class="t" style="left:-111px;width:300px;text-align:center;top:625px;font-size:9px;font-weight:400;color:#222;line-height:11px;">379</div>
<div style="position:absolute;left:27px;top:648px;width:23px;height:1px;background:#dddddd;"></div>
<div class="t" style="left:-111px;width:300px;text-align:center;top:638px;font-size:9px;font-weight:400;color:#222;line-height:11px;">380</div>
<div style="position:absolute;left:27px;top:661px;width:23px;height:1px;background:#dddddd;"></div>
<div class="t" style="left:-111px;width:300px;text-align:center;top:651px;font-size:9px;font-weight:400;color:#222;line-height:11px;">381</div>
<div style="position:absolute;left:27px;top:674px;width:23px;height:1px;background:#dddddd;"></div>
<div class="t" style="left:-111px;width:300px;text-align:center;top:664px;font-size:9px;font-weight:400;color:#222;line-height:11px;">382</div>
<div style="position:absolute;left:27px;top:687px;width:23px;height:1px;background:#dddddd;"></div>
<div class="t" style="left:-111px;width:300px;text-align:center;top:677px;font-size:9px;font-weight:400;color:#222;line-height:11px;">383</div>
<div style="position:absolute;left:27px;top:700px;width:23px;height:1px;background:#dddddd;"></div>
<div class="t" style="left:-111px;width:300px;text-align:center;top:690px;font-size:9px;font-weight:400;color:#222;line-height:11px;">384</div>
<div style="position:absolute;left:27px;top:713px;width:23px;height:1px;background:#dddddd;"></div>
<div class="t" style="left:-111px;width:300px;text-align:center;top:703px;font-size:9px;font-weight:400;color:#222;line-height:11px;">385</div>
<div style="position:absolute;left:27px;top:726px;width:23px;height:1px;background:#dddddd;"></div>
<div class="t" style="left:-111px;width:300px;text-align:center;top:716px;font-size:9px;font-weight:400;color:#222;line-height:11px;">386</div>
<div style="position:absolute;left:27px;top:739px;width:23px;height:1px;background:#dddddd;"></div>
<div class="t" style="left:-111px;width:300px;text-align:center;top:729px;font-size:9px;font-weight:400;color:#222;line-height:11px;">387</div>
<div style="position:absolute;left:27px;top:752px;width:23px;height:1px;background:#dddddd;"></div>
<div class="t" style="left:-111px;width:300px;text-align:center;top:742px;font-size:9px;font-weight:400;color:#222;line-height:11px;">388</div>
<div style="position:absolute;left:27px;top:765px;width:23px;height:1px;background:#dddddd;"></div>
<div class="t" style="left:-111px;width:300px;text-align:center;top:755px;font-size:9px;font-weight:400;color:#222;line-height:11px;">389</div>
<div style="position:absolute;left:27px;top:778px;width:23px;height:1px;background:#dddddd;"></div>
<div class="t" style="left:-111px;width:300px;text-align:center;top:768px;font-size:9px;font-weight:400;color:#222;line-height:11px;">390</div>
<div style="position:absolute;left:27px;top:807px;width:23px;height:1px;background:#dddddd;"></div>
<div class="t" style="left:-111px;width:300px;text-align:center;top:795px;font-size:9px;font-weight:400;color:#222;line-height:11px;">391</div>
<div style="position:absolute;left:27px;top:820px;width:23px;height:1px;background:#dddddd;"></div>
<div class="t" style="left:-111px;width:300px;text-align:center;top:810px;font-size:9px;font-weight:400;color:#222;line-height:11px;">392</div>
<div style="position:absolute;left:27px;top:833px;width:23px;height:1px;background:#dddddd;"></div>
<div class="t" style="left:-111px;width:300px;text-align:center;top:823px;font-size:9px;font-weight:400;color:#222;line-height:11px;">393</div>
<div style="position:absolute;left:27px;top:846px;width:23px;height:1px;background:#dddddd;"></div>
<div class="t" style="left:-111px;width:300px;text-align:center;top:836px;font-size:9px;font-weight:400;color:#222;line-height:11px;">394</div>
<div style="position:absolute;left:27px;top:859px;width:23px;height:1px;background:#dddddd;"></div>
<div class="t" style="left:-111px;width:300px;text-align:center;top:849px;font-size:9px;font-weight:400;color:#222;line-height:11px;">395</div>
<div style="position:absolute;left:27px;top:872px;width:23px;height:1px;background:#dddddd;"></div>
<div class="t" style="left:-111px;width:300px;text-align:center;top:862px;font-size:9px;font-weight:400;color:#222;line-height:11px;">396</div>
<div style="position:absolute;left:27px;top:885px;width:23px;height:1px;background:#dddddd;"></div>
<div class="t" style="left:-111px;width:300px;text-align:center;top:875px;font-size:9px;font-weight:400;color:#222;line-height:11px;">397</div>
<div style="position:absolute;left:27px;top:898px;width:23px;height:1px;background:#dddddd;"></div>
<div class="t" style="left:-111px;width:300px;text-align:center;top:888px;font-size:9px;font-weight:400;color:#222;line-height:11px;">398</div>
<div style="position:absolute;left:27px;top:911px;width:23px;height:1px;background:#dddddd;"></div>
<div class="t" style="left:-111px;width:300px;text-align:center;top:901px;font-size:9px;font-weight:400;color:#222;line-height:11px;">399</div>
<div style="position:absolute;left:27px;top:924px;width:23px;height:1px;background:#dddddd;"></div>
<div class="t" style="left:-111px;width:300px;text-align:center;top:914px;font-size:9px;font-weight:400;color:#222;line-height:11px;">400</div>
<div style="position:absolute;left:27px;top:937px;width:23px;height:1px;background:#dddddd;"></div>
<div class="t" style="left:-111px;width:300px;text-align:center;top:927px;font-size:9px;font-weight:400;color:#222;line-height:11px;">401</div>
<div style="position:absolute;left:27px;top:950px;width:23px;height:1px;background:#dddddd;"></div>
<div class="t" style="left:-111px;width:300px;text-align:center;top:940px;font-size:9px;font-weight:400;color:#222;line-height:11px;">402</div>
<div style="position:absolute;left:27px;top:963px;width:23px;height:1px;background:#dddddd;"></div>
<div class="t" style="left:-111px;width:300px;text-align:center;top:953px;font-size:9px;font-weight:400;color:#222;line-height:11px;">403</div>
<div style="position:absolute;left:27px;top:976px;width:23px;height:1px;background:#dddddd;"></div>
<div class="t" style="left:-111px;width:300px;text-align:center;top:966px;font-size:9px;font-weight:400;color:#222;line-height:11px;">404</div>
<div style="position:absolute;left:27px;top:989px;width:23px;height:1px;background:#dddddd;"></div>
<div class="t" style="left:-111px;width:300px;text-align:center;top:979px;font-size:9px;font-weight:400;color:#222;line-height:11px;">405</div>
<div style="position:absolute;left:27px;top:1002px;width:23px;height:1px;background:#dddddd;"></div>
<div class="t" style="left:-111px;width:300px;text-align:center;top:992px;font-size:9px;font-weight:400;color:#222;line-height:11px;">406</div>
<div style="position:absolute;left:27px;top:1015px;width:23px;height:1px;background:#dddddd;"></div>
<div class="t" style="left:-111px;width:300px;text-align:center;top:1005px;font-size:9px;font-weight:400;color:#222;line-height:11px;">407</div>
<div style="position:absolute;left:27px;top:1028px;width:23px;height:1px;background:#dddddd;"></div>
<div class="t" style="left:-111px;width:300px;text-align:center;top:1018px;font-size:9px;font-weight:400;color:#222;line-height:11px;">408</div>
<div style="position:absolute;left:27px;top:1041px;width:23px;height:1px;background:#dddddd;"></div>
<div class="t" style="left:-111px;width:300px;text-align:center;top:1031px;font-size:9px;font-weight:400;color:#222;line-height:11px;">409</div>
<div style="position:absolute;left:27px;top:1054px;width:23px;height:1px;background:#dddddd;"></div>
<div class="t" style="left:-111px;width:300px;text-align:center;top:1044px;font-size:9px;font-weight:400;color:#222;line-height:11px;">410</div>
<div style="position:absolute;left:27px;top:1083px;width:23px;height:1px;background:#dddddd;"></div>
<div class="t" style="left:-111px;width:300px;text-align:center;top:1071px;font-size:9px;font-weight:400;color:#222;line-height:11px;">411</div>
<div style="position:absolute;left:27px;top:1096px;width:23px;height:1px;background:#dddddd;"></div>
<div class="t" style="left:-111px;width:300px;text-align:center;top:1086px;font-size:9px;font-weight:400;color:#222;line-height:11px;">412</div>
<div style="position:absolute;left:27px;top:1109px;width:23px;height:1px;background:#dddddd;"></div>
<div class="t" style="left:-111px;width:300px;text-align:center;top:1099px;font-size:9px;font-weight:400;color:#222;line-height:11px;">413</div>
<div style="position:absolute;left:27px;top:1122px;width:23px;height:1px;background:#dddddd;"></div>
<div class="t" style="left:-111px;width:300px;text-align:center;top:1112px;font-size:9px;font-weight:400;color:#222;line-height:11px;">414</div>
<div style="position:absolute;left:27px;top:1135px;width:23px;height:1px;background:#dddddd;"></div>
<div class="t" style="left:-111px;width:300px;text-align:center;top:1125px;font-size:9px;font-weight:400;color:#222;line-height:11px;">415</div>
<div style="position:absolute;left:27px;top:1148px;width:23px;height:1px;background:#dddddd;"></div>
<div class="t" style="left:-111px;width:300px;text-align:center;top:1138px;font-size:9px;font-weight:400;color:#222;line-height:11px;">416</div>
<div style="position:absolute;left:27px;top:1161px;width:23px;height:1px;background:#dddddd;"></div>
<div class="t" style="left:-111px;width:300px;text-align:center;top:1151px;font-size:9px;font-weight:400;color:#222;line-height:11px;">417</div>
<div style="position:absolute;left:27px;top:1174px;width:23px;height:1px;background:#dddddd;"></div>
<div class="t" style="left:-111px;width:300px;text-align:center;top:1164px;font-size:9px;font-weight:400;color:#222;line-height:11px;">418</div>
<div style="position:absolute;left:27px;top:1187px;width:23px;height:1px;background:#dddddd;"></div>
<div class="t" style="left:-111px;width:300px;text-align:center;top:1177px;font-size:9px;font-weight:400;color:#222;line-height:11px;">419</div>
<div style="position:absolute;left:27px;top:1200px;width:23px;height:1px;background:#dddddd;"></div>
<div class="t" style="left:-111px;width:300px;text-align:center;top:1190px;font-size:9px;font-weight:400;color:#222;line-height:11px;">420</div>
<div style="position:absolute;left:27px;top:1213px;width:23px;height:1px;background:#dddddd;"></div>
<div class="t" style="left:-111px;width:300px;text-align:center;top:1203px;font-size:9px;font-weight:400;color:#222;line-height:11px;">421</div>
<div style="position:absolute;left:27px;top:1226px;width:23px;height:1px;background:#dddddd;"></div>
<div class="t" style="left:-111px;width:300px;text-align:center;top:1216px;font-size:9px;font-weight:400;color:#222;line-height:11px;">422</div>
<div style="position:absolute;left:27px;top:1239px;width:23px;height:1px;background:#dddddd;"></div>
<div class="t" style="left:-111px;width:300px;text-align:center;top:1229px;font-size:9px;font-weight:400;color:#222;line-height:11px;">423</div>
<div style="position:absolute;left:27px;top:1252px;width:23px;height:1px;background:#dddddd;"></div>
<div class="t" style="left:-111px;width:300px;text-align:center;top:1242px;font-size:9px;font-weight:400;color:#222;line-height:11px;">424</div>
<div style="position:absolute;left:27px;top:1265px;width:23px;height:1px;background:#dddddd;"></div>
<div class="t" style="left:-111px;width:300px;text-align:center;top:1255px;font-size:9px;font-weight:400;color:#222;line-height:11px;">425</div>
<div style="position:absolute;left:27px;top:1278px;width:23px;height:1px;background:#dddddd;"></div>
<div class="t" style="left:-111px;width:300px;text-align:center;top:1268px;font-size:9px;font-weight:400;color:#222;line-height:11px;">426</div>
<div style="position:absolute;left:27px;top:1291px;width:23px;height:1px;background:#dddddd;"></div>
<div class="t" style="left:-111px;width:300px;text-align:center;top:1281px;font-size:9px;font-weight:400;color:#222;line-height:11px;">427</div>
<div style="position:absolute;left:27px;top:1304px;width:23px;height:1px;background:#dddddd;"></div>
<div class="t" style="left:-111px;width:300px;text-align:center;top:1294px;font-size:9px;font-weight:400;color:#222;line-height:11px;">428</div>
<div style="position:absolute;left:27px;top:1317px;width:23px;height:1px;background:#dddddd;"></div>
<div class="t" style="left:-111px;width:300px;text-align:center;top:1307px;font-size:9px;font-weight:400;color:#222;line-height:11px;">429</div>
<div style="position:absolute;left:27px;top:1330px;width:23px;height:1px;background:#dddddd;"></div>
<div class="t" style="left:-111px;width:300px;text-align:center;top:1320px;font-size:9px;font-weight:400;color:#222;line-height:11px;">430</div>
<div style="position:absolute;left:27px;top:1343px;width:23px;height:1px;background:#dddddd;"></div>
<div class="t" style="left:-111px;width:300px;text-align:center;top:1333px;font-size:9px;font-weight:400;color:#222;line-height:11px;">431</div>
<div style="position:absolute;left:27px;top:1356px;width:23px;height:1px;background:#dddddd;"></div>
<div class="t" style="left:-111px;width:300px;text-align:center;top:1346px;font-size:9px;font-weight:400;color:#222;line-height:11px;">432</div>
<div style="position:absolute;left:27px;top:1369px;width:23px;height:1px;background:#dddddd;"></div>
<div class="t" style="left:-111px;width:300px;text-align:center;top:1359px;font-size:9px;font-weight:400;color:#222;line-height:11px;">433</div>
<div style="position:absolute;left:27px;top:1382px;width:23px;height:1px;background:#dddddd;"></div>
<div class="t" style="left:-111px;width:300px;text-align:center;top:1372px;font-size:9px;font-weight:400;color:#222;line-height:11px;">434</div>
<div style="position:absolute;left:51px;top:281px;width:1191px;height:39px;background:#073a6c;"></div>
<div class="t" style="left:54px;top:282px;font-size:11px;font-weight:700;color:#fff;line-height:12px;">Cohort Analysis</div>
<div style="position:absolute;left:51px;top:320px;width:1191px;height:14px;background:#6fa9d0;"></div>
<div style="position:absolute;left:51px;top:281px;width:1191px;height:1px;background:#d0cccc;"></div>
<div style="position:absolute;left:64px;top:346px;width:1178px;height:14px;background:#073a6c;"></div>
<div class="t" style="left:68px;top:347px;font-size:11.2px;font-weight:700;color:#fff;line-height:12px;">Unit Economics – Cohort Analysis</div>
<svg style="left:54px;top:352px" width="5" height="5" viewBox="0 0 5 5"><rect x="0" y="0" width="1.2" height="1.8" fill="#000"/><rect x="3.3" y="0" width="1.2" height="1.8" fill="#000"/><rect x="0.9" y="1.8" width="2.7" height="1.3" fill="#000"/><rect x="0" y="3.1" width="1.2" height="1.9" fill="#000"/><rect x="3.3" y="3.1" width="1.2" height="1.9" fill="#000"/></svg>
<div style="position:absolute;left:78px;top:372px;width:1164px;height:14px;background:#6fa9d0;"></div>
<div class="t" style="left:81px;top:373px;font-size:11.5px;font-weight:700;color:#fff;line-height:12px;">Monthly Cohorts (Absolute Values Monthly-Based)</div>
<svg style="left:68px;top:378px" width="5" height="5" viewBox="0 0 5 5"><rect x="0" y="0" width="1.2" height="1.8" fill="#000"/><rect x="3.3" y="0" width="1.2" height="1.8" fill="#000"/><rect x="0.9" y="1.8" width="2.7" height="1.3" fill="#000"/><rect x="0" y="3.1" width="1.2" height="1.9" fill="#000"/><rect x="3.3" y="3.1" width="1.2" height="1.9" fill="#000"/></svg>
<div style="position:absolute;left:78px;top:398px;width:1164px;height:14px;background:#6fa9d0;"></div>
<div class="t" style="left:81px;top:399px;font-size:11.5px;font-weight:700;color:#fff;line-height:12px;">Monthly Cohorts (Relative Values Monthly-Based)</div>
<svg style="left:68px;top:404px" width="5" height="5" viewBox="0 0 5 5"><rect x="0" y="0" width="1.2" height="1.8" fill="#000"/><rect x="3.3" y="0" width="1.2" height="1.8" fill="#000"/><rect x="0.9" y="1.8" width="2.7" height="1.3" fill="#000"/><rect x="0" y="3.1" width="1.2" height="1.9" fill="#000"/><rect x="3.3" y="3.1" width="1.2" height="1.9" fill="#000"/></svg>
<div style="position:absolute;left:78px;top:424px;width:1164px;height:14px;background:#6fa9d0;"></div>
<div class="t" style="left:81px;top:425px;font-size:11.5px;font-weight:700;color:#fff;line-height:12px;">Annual Cohorts (Relative Values Monthly-Based)</div>
<svg style="left:68px;top:430px" width="5" height="5" viewBox="0 0 5 5"><rect x="0" y="0" width="1.2" height="1.8" fill="#000"/><rect x="3.3" y="0" width="1.2" height="1.8" fill="#000"/><rect x="0.9" y="1.8" width="2.7" height="1.3" fill="#000"/><rect x="0" y="3.1" width="1.2" height="1.9" fill="#000"/><rect x="3.3" y="3.1" width="1.2" height="1.9" fill="#000"/></svg>
<div style="position:absolute;left:78px;top:450px;width:1164px;height:14px;background:#6fa9d0;"></div>
<div class="t" style="left:81px;top:451px;font-size:11.5px;font-weight:700;color:#fff;line-height:12px;">Annual Cohorts (Relative Values Annually-Based)</div>
<svg style="left:68px;top:456px" width="5" height="5" viewBox="0 0 5 5"><rect x="0" y="0" width="1.2" height="1.8" fill="#000"/><rect x="3.3" y="0" width="1.2" height="1.8" fill="#000"/><rect x="0.9" y="1.8" width="2.7" height="1.3" fill="#000"/><rect x="0" y="3.1" width="1.2" height="1.9" fill="#000"/><rect x="3.3" y="3.1" width="1.2" height="1.9" fill="#000"/></svg>
<div style="position:absolute;left:2px;top:385px;width:9px;height:9px;border:1px solid #8d949a;background:#e8e8e8"></div>
<div style="position:absolute;left:4px;top:390px;width:7px;height:2px;background:#555;"></div>
<div style="position:absolute;left:6px;top:387px;width:2px;height:8px;background:#555;"></div>
<div style="position:absolute;left:2px;top:411px;width:9px;height:9px;border:1px solid #8d949a;background:#e8e8e8"></div>
<div style="position:absolute;left:4px;top:416px;width:7px;height:2px;background:#555;"></div>
<div style="position:absolute;left:6px;top:413px;width:2px;height:8px;background:#555;"></div>
<div style="position:absolute;left:2px;top:437px;width:9px;height:9px;border:1px solid #8d949a;background:#e8e8e8"></div>
<div style="position:absolute;left:4px;top:442px;width:7px;height:2px;background:#555;"></div>
<div style="position:absolute;left:6px;top:439px;width:2px;height:8px;background:#555;"></div>
<div style="position:absolute;left:92px;top:476px;width:1150px;height:14px;background:#e6e6e6;"></div>
<div class="t" style="left:95px;top:477px;font-size:11.6px;font-weight:700;color:#000;line-height:12px;">Revenues</div>
<svg style="left:82px;top:482px" width="5" height="5" viewBox="0 0 5 5"><rect x="0" y="0" width="1.2" height="1.8" fill="#000"/><rect x="3.3" y="0" width="1.2" height="1.8" fill="#000"/><rect x="0.9" y="1.8" width="2.7" height="1.3" fill="#000"/><rect x="0" y="3.1" width="1.2" height="1.9" fill="#000"/><rect x="3.3" y="3.1" width="1.2" height="1.9" fill="#000"/></svg>
<div style="position:absolute;left:92px;top:502px;width:883px;height:13px;background:#6fa9d0;"></div>
<div class="t" style="right:1014px;top:503px;font-size:11.5px;font-weight:700;color:#fff;line-height:12px;">Year</div>
<div class="t" style="right:964px;top:503px;font-size:11px;font-weight:700;color:#fff;line-height:12px;">1</div>
<div class="t" style="right:911px;top:503px;font-size:11px;font-weight:700;color:#fff;line-height:12px;">2</div>
<div class="t" style="right:858px;top:503px;font-size:11px;font-weight:700;color:#fff;line-height:12px;">3</div>
<div class="t" style="right:805px;top:503px;font-size:11px;font-weight:700;color:#fff;line-height:12px;">4</div>
<div class="t" style="right:752px;top:503px;font-size:11px;font-weight:700;color:#fff;line-height:12px;">5</div>
<div class="t" style="right:699px;top:503px;font-size:11px;font-weight:700;color:#fff;line-height:12px;">6</div>
<div class="t" style="right:646px;top:503px;font-size:11px;font-weight:700;color:#fff;line-height:12px;">7</div>
<div class="t" style="right:593px;top:503px;font-size:11px;font-weight:700;color:#fff;line-height:12px;">8</div>
<div class="t" style="right:540px;top:503px;font-size:11px;font-weight:700;color:#fff;line-height:12px;">9</div>
<div class="t" style="right:487px;top:503px;font-size:11px;font-weight:700;color:#fff;line-height:12px;">10</div>
<div class="t" style="right:434px;top:503px;font-size:11px;font-weight:700;color:#fff;line-height:12px;">11</div>
<div class="t" style="right:381px;top:503px;font-size:11px;font-weight:700;color:#fff;line-height:12px;">12</div>
<div class="t" style="right:328px;top:503px;font-size:11px;font-weight:700;color:#fff;line-height:12px;">13</div>
<div class="t" style="right:275px;top:503px;font-size:11px;font-weight:700;color:#fff;line-height:12px;">14</div>
<div class="t" style="left:-32px;width:300px;text-align:center;top:514px;font-size:11.6px;font-weight:700;color:#000;line-height:14px;">Openin</div>
<div class="t" style="left:-32px;width:300px;text-align:center;top:530px;font-size:11.6px;font-weight:700;color:#000;line-height:13px;">g Year</div>
<div class="t" style="left:18px;width:300px;text-align:center;top:514px;font-size:11.6px;font-weight:700;color:#000;line-height:14px;">Store</div>
<div class="t" style="left:18px;width:300px;text-align:center;top:530px;font-size:11.6px;font-weight:700;color:#000;line-height:13px;">Count</div>
<div style="position:absolute;left:96px;top:542px;width:46px;height:1px;background:#000;"></div>
<div style="position:absolute;left:147px;top:542px;width:42px;height:1px;background:#000;"></div>
<div style="position:absolute;left:92px;top:515px;width:141px;height:212px;background:#e4e4e4;"></div>
<div style="position:absolute;left:92px;top:502px;width:883px;height:13px;background:#6fa9d0;"></div>
<div class="t" style="right:1014px;top:503px;font-size:11.5px;font-weight:700;color:#fff;line-height:12px;">Year</div>
<div class="t" style="right:964px;top:503px;font-size:11px;font-weight:700;color:#fff;line-height:12px;">1</div>
<div class="t" style="right:911px;top:503px;font-size:11px;font-weight:700;color:#fff;line-height:12px;">2</div>
<div class="t" style="right:858px;top:503px;font-size:11px;font-weight:700;color:#fff;line-height:12px;">3</div>
<div class="t" style="right:805px;top:503px;font-size:11px;font-weight:700;color:#fff;line-height:12px;">4</div>
<div class="t" style="right:752px;top:503px;font-size:11px;font-weight:700;color:#fff;line-height:12px;">5</div>
<div class="t" style="right:699px;top:503px;font-size:11px;font-weight:700;color:#fff;line-height:12px;">6</div>
<div class="t" style="right:646px;top:503px;font-size:11px;font-weight:700;color:#fff;line-height:12px;">7</div>
<div class="t" style="right:593px;top:503px;font-size:11px;font-weight:700;color:#fff;line-height:12px;">8</div>
<div class="t" style="right:540px;top:503px;font-size:11px;font-weight:700;color:#fff;line-height:12px;">9</div>
<div class="t" style="right:487px;top:503px;font-size:11px;font-weight:700;color:#fff;line-height:12px;">10</div>
<div class="t" style="right:434px;top:503px;font-size:11px;font-weight:700;color:#fff;line-height:12px;">11</div>
<div class="t" style="right:381px;top:503px;font-size:11px;font-weight:700;color:#fff;line-height:12px;">12</div>
<div class="t" style="right:328px;top:503px;font-size:11px;font-weight:700;color:#fff;line-height:12px;">13</div>
<div class="t" style="right:275px;top:503px;font-size:11px;font-weight:700;color:#fff;line-height:12px;">14</div>
<div class="t" style="left:-32px;width:300px;text-align:center;top:514px;font-size:11.6px;font-weight:700;color:#000;line-height:14px;">Openin</div>
<div class="t" style="left:-32px;width:300px;text-align:center;top:530px;font-size:11.6px;font-weight:700;color:#000;line-height:13px;">g Year</div>
<div class="t" style="left:18px;width:300px;text-align:center;top:514px;font-size:11.6px;font-weight:700;color:#000;line-height:14px;">Store</div>
<div class="t" style="left:18px;width:300px;text-align:center;top:530px;font-size:11.6px;font-weight:700;color:#000;line-height:13px;">Count</div>
<div style="position:absolute;left:96px;top:542px;width:46px;height:1px;background:#000;"></div>
<div style="position:absolute;left:147px;top:542px;width:42px;height:1px;background:#000;"></div>
<div class="t" style="right:1111px;top:545px;font-size:11px;font-weight:400;color:#000;line-height:12px;letter-spacing:-0.3px">2010</div>
<div class="t" style="left:19px;width:300px;text-align:center;top:545px;font-size:11px;font-weight:400;color:#1e8a5e;line-height:12px;">6</div>
<div style="position:absolute;left:269px;top:551px;width:4px;height:1px;background:#000;"></div>
<div style="position:absolute;left:322px;top:551px;width:4px;height:1px;background:#000;"></div>
<div style="position:absolute;left:375px;top:551px;width:4px;height:1px;background:#000;"></div>
<div style="position:absolute;left:428px;top:551px;width:4px;height:1px;background:#000;"></div>
<div class="t" style="right:752px;top:545px;font-size:11px;font-weight:400;color:#000;line-height:12px;">4,302</div>
<div class="t" style="right:699px;top:545px;font-size:11px;font-weight:400;color:#000;line-height:12px;">4,412</div>
<div class="t" style="right:646px;top:545px;font-size:11px;font-weight:400;color:#000;line-height:12px;">4,814</div>
<div class="t" style="right:593px;top:545px;font-size:11px;font-weight:400;color:#000;line-height:12px;">5,857</div>
<div class="t" style="right:540px;top:545px;font-size:11px;font-weight:400;color:#000;line-height:12px;">5,930</div>
<div class="t" style="right:487px;top:545px;font-size:11px;font-weight:400;color:#000;line-height:12px;">5,892</div>
<div class="t" style="right:434px;top:545px;font-size:11px;font-weight:400;color:#000;line-height:12px;">6,067</div>
<div class="t" style="right:381px;top:545px;font-size:11px;font-weight:400;color:#000;line-height:12px;">6,942</div>
<div class="t" style="right:328px;top:545px;font-size:11px;font-weight:400;color:#000;line-height:12px;">7,199</div>
<div class="t" style="right:275px;top:545px;font-size:11px;font-weight:400;color:#000;line-height:12px;">944</div>
<div class="t" style="right:1111px;top:558px;font-size:11px;font-weight:400;color:#000;line-height:12px;letter-spacing:-0.3px">2011</div>
<div class="t" style="left:19px;width:300px;text-align:center;top:558px;font-size:11px;font-weight:400;color:#1e8a5e;line-height:12px;">9</div>
<div style="position:absolute;left:269px;top:564px;width:4px;height:1px;background:#000;"></div>
<div style="position:absolute;left:322px;top:564px;width:4px;height:1px;background:#000;"></div>
<div style="position:absolute;left:375px;top:564px;width:4px;height:1px;background:#000;"></div>
<div class="t" style="right:805px;top:558px;font-size:11px;font-weight:400;color:#000;line-height:12px;">7,331</div>
<div class="t" style="right:752px;top:558px;font-size:11px;font-weight:400;color:#000;line-height:12px;">8,467</div>
<div class="t" style="right:699px;top:558px;font-size:11px;font-weight:400;color:#000;line-height:12px;">9,522</div>
<div class="t" style="right:646px;top:558px;font-size:11px;font-weight:400;color:#000;line-height:12px;">10,346</div>
<div class="t" style="right:593px;top:558px;font-size:11px;font-weight:400;color:#000;line-height:12px;">11,139</div>
<div class="t" style="right:540px;top:558px;font-size:11px;font-weight:400;color:#000;line-height:12px;">12,266</div>
<div class="t" style="right:487px;top:558px;font-size:11px;font-weight:400;color:#000;line-height:12px;">13,165</div>
<div class="t" style="right:434px;top:558px;font-size:11px;font-weight:400;color:#000;line-height:12px;">13,705</div>
<div class="t" style="right:381px;top:558px;font-size:11px;font-weight:400;color:#000;line-height:12px;">13,989</div>
<div class="t" style="right:328px;top:558px;font-size:11px;font-weight:400;color:#000;line-height:12px;">6,910</div>
<div style="position:absolute;left:958px;top:564px;width:4px;height:1px;background:#000;"></div>
<div class="t" style="right:1111px;top:571px;font-size:11px;font-weight:400;color:#000;line-height:12px;letter-spacing:-0.3px">2012</div>
<div class="t" style="left:19px;width:300px;text-align:center;top:571px;font-size:11px;font-weight:400;color:#1e8a5e;line-height:12px;">10</div>
<div style="position:absolute;left:269px;top:577px;width:4px;height:1px;background:#000;"></div>
<div style="position:absolute;left:322px;top:577px;width:4px;height:1px;background:#000;"></div>
<div class="t" style="right:858px;top:571px;font-size:11px;font-weight:400;color:#000;line-height:12px;">14,132</div>
<div class="t" style="right:805px;top:571px;font-size:11px;font-weight:400;color:#000;line-height:12px;">16,474</div>
<div class="t" style="right:752px;top:571px;font-size:11px;font-weight:400;color:#000;line-height:12px;">17,997</div>
<div class="t" style="right:699px;top:571px;font-size:11px;font-weight:400;color:#000;line-height:12px;">19,958</div>
<div class="t" style="right:646px;top:571px;font-size:11px;font-weight:400;color:#000;line-height:12px;">21,391</div>
<div class="t" style="right:593px;top:571px;font-size:11px;font-weight:400;color:#000;line-height:12px;">21,490</div>
<div class="t" style="right:540px;top:571px;font-size:11px;font-weight:400;color:#000;line-height:12px;">25,880</div>
<div class="t" style="right:487px;top:571px;font-size:11px;font-weight:400;color:#000;line-height:12px;">25,965</div>
<div class="t" style="right:434px;top:571px;font-size:11px;font-weight:400;color:#000;line-height:12px;">24,246</div>
<div class="t" style="right:381px;top:571px;font-size:11px;font-weight:400;color:#000;line-height:12px;">11,122</div>
<div style="position:absolute;left:905px;top:577px;width:4px;height:1px;background:#000;"></div>
<div style="position:absolute;left:958px;top:577px;width:4px;height:1px;background:#000;"></div>
<div class="t" style="right:1111px;top:584px;font-size:11px;font-weight:400;color:#000;line-height:12px;letter-spacing:-0.3px">2013</div>
<div class="t" style="left:19px;width:300px;text-align:center;top:584px;font-size:11px;font-weight:400;color:#1e8a5e;line-height:12px;">20</div>
<div style="position:absolute;left:269px;top:590px;width:4px;height:1px;background:#000;"></div>
<div class="t" style="right:911px;top:584px;font-size:11px;font-weight:400;color:#000;line-height:12px;">11,570</div>
<div class="t" style="right:858px;top:584px;font-size:11px;font-weight:400;color:#000;line-height:12px;">15,447</div>
<div class="t" style="right:805px;top:584px;font-size:11px;font-weight:400;color:#000;line-height:12px;">20,122</div>
<div class="t" style="right:752px;top:584px;font-size:11px;font-weight:400;color:#000;line-height:12px;">23,886</div>
<div class="t" style="right:699px;top:584px;font-size:11px;font-weight:400;color:#000;line-height:12px;">26,195</div>
<div class="t" style="right:646px;top:584px;font-size:11px;font-weight:400;color:#000;line-height:12px;">27,848</div>
<div class="t" style="right:593px;top:584px;font-size:11px;font-weight:400;color:#000;line-height:12px;">30,547</div>
<div class="t" style="right:540px;top:584px;font-size:11px;font-weight:400;color:#000;line-height:12px;">29,991</div>
<div class="t" style="right:487px;top:584px;font-size:11px;font-weight:400;color:#000;line-height:12px;">31,164</div>
<div class="t" style="right:434px;top:584px;font-size:11px;font-weight:400;color:#000;line-height:12px;">9,608</div>
<div style="position:absolute;left:852px;top:590px;width:4px;height:1px;background:#000;"></div>
<div style="position:absolute;left:905px;top:590px;width:4px;height:1px;background:#000;"></div>
<div style="position:absolute;left:958px;top:590px;width:4px;height:1px;background:#000;"></div>
<div class="t" style="right:1111px;top:597px;font-size:11px;font-weight:400;color:#000;line-height:12px;letter-spacing:-0.3px">2014</div>
<div class="t" style="left:19px;width:300px;text-align:center;top:597px;font-size:11px;font-weight:400;color:#1e8a5e;line-height:12px;">23</div>
<div class="t" style="right:964px;top:597px;font-size:11px;font-weight:400;color:#000;line-height:12px;">5,673</div>
<div class="t" style="right:911px;top:597px;font-size:11px;font-weight:400;color:#000;line-height:12px;">10,443</div>
<div class="t" style="right:858px;top:597px;font-size:11px;font-weight:400;color:#000;line-height:12px;">14,349</div>
<div class="t" style="right:805px;top:597px;font-size:11px;font-weight:400;color:#000;line-height:12px;">18,026</div>
<div class="t" style="right:752px;top:597px;font-size:11px;font-weight:400;color:#000;line-height:12px;">20,090</div>
<div class="t" style="right:699px;top:597px;font-size:11px;font-weight:400;color:#000;line-height:12px;">20,341</div>
<div class="t" style="right:646px;top:597px;font-size:11px;font-weight:400;color:#000;line-height:12px;">21,684</div>
<div class="t" style="right:593px;top:597px;font-size:11px;font-weight:400;color:#000;line-height:12px;">19,877</div>
<div class="t" style="right:540px;top:597px;font-size:11px;font-weight:400;color:#000;line-height:12px;">20,376</div>
<div class="t" style="right:487px;top:597px;font-size:11px;font-weight:400;color:#000;line-height:12px;">7,123</div>
<div style="position:absolute;left:799px;top:603px;width:4px;height:1px;background:#000;"></div>
<div style="position:absolute;left:852px;top:603px;width:4px;height:1px;background:#000;"></div>
<div style="position:absolute;left:905px;top:603px;width:4px;height:1px;background:#000;"></div>
<div style="position:absolute;left:958px;top:603px;width:4px;height:1px;background:#000;"></div>
<div class="t" style="right:1111px;top:610px;font-size:11px;font-weight:400;color:#000;line-height:12px;letter-spacing:-0.3px">2015</div>
<div class="t" style="left:19px;width:300px;text-align:center;top:610px;font-size:11px;font-weight:400;color:#1e8a5e;line-height:12px;">17</div>
<div class="t" style="right:964px;top:610px;font-size:11px;font-weight:400;color:#000;line-height:12px;">5,768</div>
<div class="t" style="right:911px;top:610px;font-size:11px;font-weight:400;color:#000;line-height:12px;">12,223</div>
<div class="t" style="right:858px;top:610px;font-size:11px;font-weight:400;color:#000;line-height:12px;">16,463</div>
<div class="t" style="right:805px;top:610px;font-size:11px;font-weight:400;color:#000;line-height:12px;">17,652</div>
<div class="t" style="right:752px;top:610px;font-size:11px;font-weight:400;color:#000;line-height:12px;">18,672</div>
<div class="t" style="right:699px;top:610px;font-size:11px;font-weight:400;color:#000;line-height:12px;">21,937</div>
<div class="t" style="right:646px;top:610px;font-size:11px;font-weight:400;color:#000;line-height:12px;">20,849</div>
<div class="t" style="right:593px;top:610px;font-size:11px;font-weight:400;color:#000;line-height:12px;">21,168</div>
<div class="t" style="right:540px;top:610px;font-size:11px;font-weight:400;color:#000;line-height:12px;">5,044</div>
<div style="position:absolute;left:746px;top:616px;width:4px;height:1px;background:#000;"></div>
<div style="position:absolute;left:799px;top:616px;width:4px;height:1px;background:#000;"></div>
<div style="position:absolute;left:852px;top:616px;width:4px;height:1px;background:#000;"></div>
<div style="position:absolute;left:905px;top:616px;width:4px;height:1px;background:#000;"></div>
<div style="position:absolute;left:958px;top:616px;width:4px;height:1px;background:#000;"></div>
<div class="t" style="right:1111px;top:623px;font-size:11px;font-weight:400;color:#000;line-height:12px;letter-spacing:-0.3px">2016</div>
<div class="t" style="left:19px;width:300px;text-align:center;top:623px;font-size:11px;font-weight:400;color:#1e8a5e;line-height:12px;">16</div>
<div class="t" style="right:964px;top:623px;font-size:11px;font-weight:400;color:#000;line-height:12px;">3,081</div>
<div class="t" style="right:911px;top:623px;font-size:11px;font-weight:400;color:#000;line-height:12px;">6,871</div>
<div class="t" style="right:858px;top:623px;font-size:11px;font-weight:400;color:#000;line-height:12px;">9,141</div>
<div class="t" style="right:805px;top:623px;font-size:11px;font-weight:400;color:#000;line-height:12px;">11,866</div>
<div class="t" style="right:752px;top:623px;font-size:11px;font-weight:400;color:#000;line-height:12px;">13,760</div>
<div class="t" style="right:699px;top:623px;font-size:11px;font-weight:400;color:#000;line-height:12px;">14,533</div>
<div class="t" style="right:646px;top:623px;font-size:11px;font-weight:400;color:#000;line-height:12px;">14,820</div>
<div class="t" style="right:593px;top:623px;font-size:11px;font-weight:400;color:#000;line-height:12px;">3,789</div>
<div style="position:absolute;left:693px;top:629px;width:4px;height:1px;background:#000;"></div>
<div style="position:absolute;left:746px;top:629px;width:4px;height:1px;background:#000;"></div>
<div style="position:absolute;left:799px;top:629px;width:4px;height:1px;background:#000;"></div>
<div style="position:absolute;left:852px;top:629px;width:4px;height:1px;background:#000;"></div>
<div style="position:absolute;left:905px;top:629px;width:4px;height:1px;background:#000;"></div>
<div style="position:absolute;left:958px;top:629px;width:4px;height:1px;background:#000;"></div>
<div class="t" style="right:1111px;top:636px;font-size:11px;font-weight:400;color:#000;line-height:12px;letter-spacing:-0.3px">2017</div>
<div class="t" style="left:19px;width:300px;text-align:center;top:636px;font-size:11px;font-weight:400;color:#1e8a5e;line-height:12px;">19</div>
<div class="t" style="right:964px;top:636px;font-size:11px;font-weight:400;color:#000;line-height:12px;">5,486</div>
<div class="t" style="right:911px;top:636px;font-size:11px;font-weight:400;color:#000;line-height:12px;">8,770</div>
<div class="t" style="right:858px;top:636px;font-size:11px;font-weight:400;color:#000;line-height:12px;">10,420</div>
<div class="t" style="right:805px;top:636px;font-size:11px;font-weight:400;color:#000;line-height:12px;">13,099</div>
<div class="t" style="right:752px;top:636px;font-size:11px;font-weight:400;color:#000;line-height:12px;">13,672</div>
<div class="t" style="right:699px;top:636px;font-size:11px;font-weight:400;color:#000;line-height:12px;">15,474</div>
<div class="t" style="right:646px;top:636px;font-size:11px;font-weight:400;color:#000;line-height:12px;">3,856</div>
<div style="position:absolute;left:640px;top:642px;width:4px;height:1px;background:#000;"></div>
<div style="position:absolute;left:693px;top:642px;width:4px;height:1px;background:#000;"></div>
<div style="position:absolute;left:746px;top:642px;width:4px;height:1px;background:#000;"></div>
<div style="position:absolute;left:799px;top:642px;width:4px;height:1px;background:#000;"></div>
<div style="position:absolute;left:852px;top:642px;width:4px;height:1px;background:#000;"></div>
<div style="position:absolute;left:905px;top:642px;width:4px;height:1px;background:#000;"></div>
<div style="position:absolute;left:958px;top:642px;width:4px;height:1px;background:#000;"></div>
<div class="t" style="right:1111px;top:649px;font-size:11px;font-weight:400;color:#000;line-height:12px;letter-spacing:-0.3px">2018</div>
<div class="t" style="left:19px;width:300px;text-align:center;top:649px;font-size:11px;font-weight:400;color:#1e8a5e;line-height:12px;">15</div>
<div class="t" style="right:964px;top:649px;font-size:11px;font-weight:400;color:#000;line-height:12px;">2,883</div>
<div class="t" style="right:911px;top:649px;font-size:11px;font-weight:400;color:#000;line-height:12px;">5,508</div>
<div class="t" style="right:858px;top:649px;font-size:11px;font-weight:400;color:#000;line-height:12px;">7,931</div>
<div class="t" style="right:805px;top:649px;font-size:11px;font-weight:400;color:#000;line-height:12px;">9,691</div>
<div class="t" style="right:752px;top:649px;font-size:11px;font-weight:400;color:#000;line-height:12px;">10,804</div>
<div class="t" style="right:699px;top:649px;font-size:11px;font-weight:400;color:#000;line-height:12px;">4,245</div>
<div style="position:absolute;left:587px;top:655px;width:4px;height:1px;background:#000;"></div>
<div style="position:absolute;left:640px;top:655px;width:4px;height:1px;background:#000;"></div>
<div style="position:absolute;left:693px;top:655px;width:4px;height:1px;background:#000;"></div>
<div style="position:absolute;left:746px;top:655px;width:4px;height:1px;background:#000;"></div>
<div style="position:absolute;left:799px;top:655px;width:4px;height:1px;background:#000;"></div>
<div style="position:absolute;left:852px;top:655px;width:4px;height:1px;background:#000;"></div>
<div style="position:absolute;left:905px;top:655px;width:4px;height:1px;background:#000;"></div>
<div style="position:absolute;left:958px;top:655px;width:4px;height:1px;background:#000;"></div>
<div class="t" style="right:1111px;top:662px;font-size:11px;font-weight:400;color:#000;line-height:12px;letter-spacing:-0.3px">2019</div>
<div class="t" style="left:19px;width:300px;text-align:center;top:662px;font-size:11px;font-weight:400;color:#1e8a5e;line-height:12px;">13</div>
<div class="t" style="right:964px;top:662px;font-size:11px;font-weight:400;color:#000;line-height:12px;">2,239</div>
<div class="t" style="right:911px;top:662px;font-size:11px;font-weight:400;color:#000;line-height:12px;">4,051</div>
<div class="t" style="right:858px;top:662px;font-size:11px;font-weight:400;color:#000;line-height:12px;">5,034</div>
<div class="t" style="right:805px;top:662px;font-size:11px;font-weight:400;color:#000;line-height:12px;">5,862</div>
<div class="t" style="right:752px;top:662px;font-size:11px;font-weight:400;color:#000;line-height:12px;">1,084</div>
<div style="position:absolute;left:534px;top:668px;width:4px;height:1px;background:#000;"></div>
<div style="position:absolute;left:587px;top:668px;width:4px;height:1px;background:#000;"></div>
<div style="position:absolute;left:640px;top:668px;width:4px;height:1px;background:#000;"></div>
<div style="position:absolute;left:693px;top:668px;width:4px;height:1px;background:#000;"></div>
<div style="position:absolute;left:746px;top:668px;width:4px;height:1px;background:#000;"></div>
<div style="position:absolute;left:799px;top:668px;width:4px;height:1px;background:#000;"></div>
<div style="position:absolute;left:852px;top:668px;width:4px;height:1px;background:#000;"></div>
<div style="position:absolute;left:905px;top:668px;width:4px;height:1px;background:#000;"></div>
<div style="position:absolute;left:958px;top:668px;width:4px;height:1px;background:#000;"></div>
<div class="t" style="right:1111px;top:675px;font-size:11px;font-weight:400;color:#000;line-height:12px;letter-spacing:-0.3px">2020</div>
<div class="t" style="left:19px;width:300px;text-align:center;top:675px;font-size:11px;font-weight:400;color:#1e8a5e;line-height:12px;">16</div>
<div class="t" style="right:964px;top:675px;font-size:11px;font-weight:400;color:#000;line-height:12px;">4,099</div>
<div class="t" style="right:911px;top:675px;font-size:11px;font-weight:400;color:#000;line-height:12px;">6,315</div>
<div class="t" style="right:858px;top:675px;font-size:11px;font-weight:400;color:#000;line-height:12px;">8,475</div>
<div class="t" style="right:805px;top:675px;font-size:11px;font-weight:400;color:#000;line-height:12px;">2,581</div>
<div style="position:absolute;left:481px;top:681px;width:4px;height:1px;background:#000;"></div>
<div style="position:absolute;left:534px;top:681px;width:4px;height:1px;background:#000;"></div>
<div style="position:absolute;left:587px;top:681px;width:4px;height:1px;background:#000;"></div>
<div style="position:absolute;left:640px;top:681px;width:4px;height:1px;background:#000;"></div>
<div style="position:absolute;left:693px;top:681px;width:4px;height:1px;background:#000;"></div>
<div style="position:absolute;left:746px;top:681px;width:4px;height:1px;background:#000;"></div>
<div style="position:absolute;left:799px;top:681px;width:4px;height:1px;background:#000;"></div>
<div style="position:absolute;left:852px;top:681px;width:4px;height:1px;background:#000;"></div>
<div style="position:absolute;left:905px;top:681px;width:4px;height:1px;background:#000;"></div>
<div style="position:absolute;left:958px;top:681px;width:4px;height:1px;background:#000;"></div>
<div class="t" style="right:1111px;top:688px;font-size:11px;font-weight:400;color:#000;line-height:12px;letter-spacing:-0.3px">2021</div>
<div class="t" style="left:19px;width:300px;text-align:center;top:688px;font-size:11px;font-weight:400;color:#1e8a5e;line-height:12px;">15</div>
<div class="t" style="right:964px;top:688px;font-size:11px;font-weight:400;color:#000;line-height:12px;">3,891</div>
<div class="t" style="right:911px;top:688px;font-size:11px;font-weight:400;color:#000;line-height:12px;">7,829</div>
<div class="t" style="right:858px;top:688px;font-size:11px;font-weight:400;color:#000;line-height:12px;">4,381</div>
<div style="position:absolute;left:428px;top:694px;width:4px;height:1px;background:#000;"></div>
<div style="position:absolute;left:481px;top:694px;width:4px;height:1px;background:#000;"></div>
<div style="position:absolute;left:534px;top:694px;width:4px;height:1px;background:#000;"></div>
<div style="position:absolute;left:587px;top:694px;width:4px;height:1px;background:#000;"></div>
<div style="position:absolute;left:640px;top:694px;width:4px;height:1px;background:#000;"></div>
<div style="position:absolute;left:693px;top:694px;width:4px;height:1px;background:#000;"></div>
<div style="position:absolute;left:746px;top:694px;width:4px;height:1px;background:#000;"></div>
<div style="position:absolute;left:799px;top:694px;width:4px;height:1px;background:#000;"></div>
<div style="position:absolute;left:852px;top:694px;width:4px;height:1px;background:#000;"></div>
<div style="position:absolute;left:905px;top:694px;width:4px;height:1px;background:#000;"></div>
<div style="position:absolute;left:958px;top:694px;width:4px;height:1px;background:#000;"></div>
<div class="t" style="right:1111px;top:701px;font-size:11px;font-weight:400;color:#000;line-height:12px;letter-spacing:-0.3px">2022</div>
<div class="t" style="left:19px;width:300px;text-align:center;top:701px;font-size:11px;font-weight:400;color:#1e8a5e;line-height:12px;">2</div>
<div class="t" style="right:964px;top:701px;font-size:11px;font-weight:400;color:#000;line-height:12px;">19</div>
<div class="t" style="right:911px;top:701px;font-size:11px;font-weight:400;color:#000;line-height:12px;">340</div>
<div style="position:absolute;left:375px;top:707px;width:4px;height:1px;background:#000;"></div>
<div style="position:absolute;left:428px;top:707px;width:4px;height:1px;background:#000;"></div>
<div style="position:absolute;left:481px;top:707px;width:4px;height:1px;background:#000;"></div>
<div style="position:absolute;left:534px;top:707px;width:4px;height:1px;background:#000;"></div>
<div style="position:absolute;left:587px;top:707px;width:4px;height:1px;background:#000;"></div>
<div style="position:absolute;left:640px;top:707px;width:4px;height:1px;background:#000;"></div>
<div style="position:absolute;left:693px;top:707px;width:4px;height:1px;background:#000;"></div>
<div style="position:absolute;left:746px;top:707px;width:4px;height:1px;background:#000;"></div>
<div style="position:absolute;left:799px;top:707px;width:4px;height:1px;background:#000;"></div>
<div style="position:absolute;left:852px;top:707px;width:4px;height:1px;background:#000;"></div>
<div style="position:absolute;left:905px;top:707px;width:4px;height:1px;background:#000;"></div>
<div style="position:absolute;left:958px;top:707px;width:4px;height:1px;background:#000;"></div>
<div style="position:absolute;left:236px;top:707px;width:5px;height:1px;background:#000;"></div>
<div class="t" style="right:1111px;top:714px;font-size:11px;font-weight:400;color:#000;line-height:12px;letter-spacing:-0.3px">2023</div>
<div class="t" style="left:19px;width:300px;text-align:center;top:714px;font-size:11px;font-weight:400;color:#1e8a5e;line-height:12px;">3</div>
<div class="t" style="right:964px;top:714px;font-size:11px;font-weight:400;color:#000;line-height:12px;">65</div>
<div style="position:absolute;left:322px;top:720px;width:4px;height:1px;background:#000;"></div>
<div style="position:absolute;left:375px;top:720px;width:4px;height:1px;background:#000;"></div>
<div style="position:absolute;left:428px;top:720px;width:4px;height:1px;background:#000;"></div>
<div style="position:absolute;left:481px;top:720px;width:4px;height:1px;background:#000;"></div>
<div style="position:absolute;left:534px;top:720px;width:4px;height:1px;background:#000;"></div>
<div style="position:absolute;left:587px;top:720px;width:4px;height:1px;background:#000;"></div>
<div style="position:absolute;left:640px;top:720px;width:4px;height:1px;background:#000;"></div>
<div style="position:absolute;left:693px;top:720px;width:4px;height:1px;background:#000;"></div>
<div style="position:absolute;left:746px;top:720px;width:4px;height:1px;background:#000;"></div>
<div style="position:absolute;left:799px;top:720px;width:4px;height:1px;background:#000;"></div>
<div style="position:absolute;left:852px;top:720px;width:4px;height:1px;background:#000;"></div>
<div style="position:absolute;left:905px;top:720px;width:4px;height:1px;background:#000;"></div>
<div style="position:absolute;left:958px;top:720px;width:4px;height:1px;background:#000;"></div>
<div style="position:absolute;left:236px;top:720px;width:5px;height:1px;background:#000;"></div>
<div style="position:absolute;left:92px;top:739px;width:1150px;height:14px;background:#e6e6e6;"></div>
<div class="t" style="left:95px;top:740px;font-size:11.6px;font-weight:700;color:#000;line-height:12px;">Revenue Per Store</div>
<svg style="left:82px;top:745px" width="5" height="5" viewBox="0 0 5 5"><rect x="0" y="0" width="1.2" height="1.8" fill="#000"/><rect x="3.3" y="0" width="1.2" height="1.8" fill="#000"/><rect x="0.9" y="1.8" width="2.7" height="1.3" fill="#000"/><rect x="0" y="3.1" width="1.2" height="1.9" fill="#000"/><rect x="3.3" y="3.1" width="1.2" height="1.9" fill="#000"/></svg>
<div style="position:absolute;left:92px;top:778px;width:141px;height:212px;background:#e4e4e4;"></div>
<div style="position:absolute;left:92px;top:765px;width:883px;height:13px;background:#6fa9d0;"></div>
<div class="t" style="right:1014px;top:766px;font-size:11.5px;font-weight:700;color:#fff;line-height:12px;">Year</div>
<div class="t" style="right:964px;top:766px;font-size:11px;font-weight:700;color:#fff;line-height:12px;">1</div>
<div class="t" style="right:911px;top:766px;font-size:11px;font-weight:700;color:#fff;line-height:12px;">2</div>
<div class="t" style="right:858px;top:766px;font-size:11px;font-weight:700;color:#fff;line-height:12px;">3</div>
<div class="t" style="right:805px;top:766px;font-size:11px;font-weight:700;color:#fff;line-height:12px;">4</div>
<div class="t" style="right:752px;top:766px;font-size:11px;font-weight:700;color:#fff;line-height:12px;">5</div>
<div class="t" style="right:699px;top:766px;font-size:11px;font-weight:700;color:#fff;line-height:12px;">6</div>
<div class="t" style="right:646px;top:766px;font-size:11px;font-weight:700;color:#fff;line-height:12px;">7</div>
<div class="t" style="right:593px;top:766px;font-size:11px;font-weight:700;color:#fff;line-height:12px;">8</div>
<div class="t" style="right:540px;top:766px;font-size:11px;font-weight:700;color:#fff;line-height:12px;">9</div>
<div class="t" style="right:487px;top:766px;font-size:11px;font-weight:700;color:#fff;line-height:12px;">10</div>
<div class="t" style="right:434px;top:766px;font-size:11px;font-weight:700;color:#fff;line-height:12px;">11</div>
<div class="t" style="right:381px;top:766px;font-size:11px;font-weight:700;color:#fff;line-height:12px;">12</div>
<div class="t" style="right:328px;top:766px;font-size:11px;font-weight:700;color:#fff;line-height:12px;">13</div>
<div class="t" style="right:275px;top:766px;font-size:11px;font-weight:700;color:#fff;line-height:12px;">14</div>
<div class="t" style="left:-32px;width:300px;text-align:center;top:777px;font-size:11.6px;font-weight:700;color:#000;line-height:14px;">Openin</div>
<div class="t" style="left:-32px;width:300px;text-align:center;top:793px;font-size:11.6px;font-weight:700;color:#000;line-height:13px;">g Year</div>
<div class="t" style="left:18px;width:300px;text-align:center;top:777px;font-size:11.6px;font-weight:700;color:#000;line-height:14px;">Store</div>
<div class="t" style="left:18px;width:300px;text-align:center;top:793px;font-size:11.6px;font-weight:700;color:#000;line-height:13px;">Count</div>
<div style="position:absolute;left:96px;top:805px;width:46px;height:1px;background:#000;"></div>
<div style="position:absolute;left:147px;top:805px;width:42px;height:1px;background:#000;"></div>
<div class="t" style="right:1111px;top:808px;font-size:11px;font-weight:400;color:#000;line-height:12px;letter-spacing:-0.3px">2010</div>
<div class="t" style="left:19px;width:300px;text-align:center;top:808px;font-size:11px;font-weight:400;color:#000;line-height:12px;">6</div>
<div style="position:absolute;left:269px;top:814px;width:4px;height:1px;background:#000;"></div>
<div style="position:absolute;left:322px;top:814px;width:4px;height:1px;background:#000;"></div>
<div style="position:absolute;left:375px;top:814px;width:4px;height:1px;background:#000;"></div>
<div style="position:absolute;left:428px;top:814px;width:4px;height:1px;background:#000;"></div>
<div class="t" style="right:752px;top:808px;font-size:11px;font-weight:400;color:#000;line-height:12px;">717</div>
<div class="t" style="right:699px;top:808px;font-size:11px;font-weight:400;color:#000;line-height:12px;">735</div>
<div class="t" style="right:646px;top:808px;font-size:11px;font-weight:400;color:#000;line-height:12px;">802</div>
<div class="t" style="right:593px;top:808px;font-size:11px;font-weight:400;color:#000;line-height:12px;">976</div>
<div class="t" style="right:540px;top:808px;font-size:11px;font-weight:400;color:#000;line-height:12px;">988</div>
<div class="t" style="right:487px;top:808px;font-size:11px;font-weight:400;color:#000;line-height:12px;">982</div>
<div class="t" style="right:434px;top:808px;font-size:11px;font-weight:400;color:#000;line-height:12px;">1,011</div>
<div class="t" style="right:381px;top:808px;font-size:11px;font-weight:400;color:#000;line-height:12px;">1,157</div>
<div class="t" style="right:328px;top:808px;font-size:11px;font-weight:400;color:#000;line-height:12px;">1,200</div>
<div class="t" style="right:275px;top:808px;font-size:11px;font-weight:400;color:#000;line-height:12px;">157</div>
<div class="t" style="right:1111px;top:821px;font-size:11px;font-weight:400;color:#000;line-height:12px;letter-spacing:-0.3px">2011</div>
<div class="t" style="left:19px;width:300px;text-align:center;top:821px;font-size:11px;font-weight:400;color:#000;line-height:12px;">9</div>
<div style="position:absolute;left:269px;top:827px;width:4px;height:1px;background:#000;"></div>
<div style="position:absolute;left:322px;top:827px;width:4px;height:1px;background:#000;"></div>
<div style="position:absolute;left:375px;top:827px;width:4px;height:1px;background:#000;"></div>
<div class="t" style="right:805px;top:821px;font-size:11px;font-weight:400;color:#000;line-height:12px;">815</div>
<div class="t" style="right:752px;top:821px;font-size:11px;font-weight:400;color:#000;line-height:12px;">941</div>
<div class="t" style="right:699px;top:821px;font-size:11px;font-weight:400;color:#000;line-height:12px;">1,058</div>
<div class="t" style="right:646px;top:821px;font-size:11px;font-weight:400;color:#000;line-height:12px;">1,150</div>
<div class="t" style="right:593px;top:821px;font-size:11px;font-weight:400;color:#000;line-height:12px;">1,238</div>
<div class="t" style="right:540px;top:821px;font-size:11px;font-weight:400;color:#000;line-height:12px;">1,363</div>
<div class="t" style="right:487px;top:821px;font-size:11px;font-weight:400;color:#000;line-height:12px;">1,463</div>
<div class="t" style="right:434px;top:821px;font-size:11px;font-weight:400;color:#000;line-height:12px;">1,523</div>
<div class="t" style="right:381px;top:821px;font-size:11px;font-weight:400;color:#000;line-height:12px;">1,554</div>
<div class="t" style="right:328px;top:821px;font-size:11px;font-weight:400;color:#000;line-height:12px;">768</div>
<div style="position:absolute;left:958px;top:827px;width:4px;height:1px;background:#000;"></div>
<div class="t" style="right:1111px;top:834px;font-size:11px;font-weight:400;color:#000;line-height:12px;letter-spacing:-0.3px">2012</div>
<div class="t" style="left:19px;width:300px;text-align:center;top:834px;font-size:11px;font-weight:400;color:#000;line-height:12px;">10</div>
<div style="position:absolute;left:269px;top:840px;width:4px;height:1px;background:#000;"></div>
<div style="position:absolute;left:322px;top:840px;width:4px;height:1px;background:#000;"></div>
<div class="t" style="right:858px;top:834px;font-size:11px;font-weight:400;color:#000;line-height:12px;">1,413</div>
<div class="t" style="right:805px;top:834px;font-size:11px;font-weight:400;color:#000;line-height:12px;">1,647</div>
<div class="t" style="right:752px;top:834px;font-size:11px;font-weight:400;color:#000;line-height:12px;">1,800</div>
<div class="t" style="right:699px;top:834px;font-size:11px;font-weight:400;color:#000;line-height:12px;">1,996</div>
<div class="t" style="right:646px;top:834px;font-size:11px;font-weight:400;color:#000;line-height:12px;">2,139</div>
<div class="t" style="right:593px;top:834px;font-size:11px;font-weight:400;color:#000;line-height:12px;">2,149</div>
<div class="t" style="right:540px;top:834px;font-size:11px;font-weight:400;color:#000;line-height:12px;">2,588</div>
<div class="t" style="right:487px;top:834px;font-size:11px;font-weight:400;color:#000;line-height:12px;">2,596</div>
<div class="t" style="right:434px;top:834px;font-size:11px;font-weight:400;color:#000;line-height:12px;">2,425</div>
<div class="t" style="right:381px;top:834px;font-size:11px;font-weight:400;color:#000;line-height:12px;">1,112</div>
<div style="position:absolute;left:905px;top:840px;width:4px;height:1px;background:#000;"></div>
<div style="position:absolute;left:958px;top:840px;width:4px;height:1px;background:#000;"></div>
<div class="t" style="right:1111px;top:847px;font-size:11px;font-weight:400;color:#000;line-height:12px;letter-spacing:-0.3px">2013</div>
<div class="t" style="left:19px;width:300px;text-align:center;top:847px;font-size:11px;font-weight:400;color:#000;line-height:12px;">20</div>
<div style="position:absolute;left:269px;top:853px;width:4px;height:1px;background:#000;"></div>
<div class="t" style="right:911px;top:847px;font-size:11px;font-weight:400;color:#000;line-height:12px;">578</div>
<div class="t" style="right:858px;top:847px;font-size:11px;font-weight:400;color:#000;line-height:12px;">772</div>
<div class="t" style="right:805px;top:847px;font-size:11px;font-weight:400;color:#000;line-height:12px;">1,006</div>
<div class="t" style="right:752px;top:847px;font-size:11px;font-weight:400;color:#000;line-height:12px;">1,194</div>
<div class="t" style="right:699px;top:847px;font-size:11px;font-weight:400;color:#000;line-height:12px;">1,310</div>
<div class="t" style="right:646px;top:847px;font-size:11px;font-weight:400;color:#000;line-height:12px;">1,392</div>
<div class="t" style="right:593px;top:847px;font-size:11px;font-weight:400;color:#000;line-height:12px;">1,527</div>
<div class="t" style="right:540px;top:847px;font-size:11px;font-weight:400;color:#000;line-height:12px;">1,500</div>
<div class="t" style="right:487px;top:847px;font-size:11px;font-weight:400;color:#000;line-height:12px;">1,558</div>
<div class="t" style="right:434px;top:847px;font-size:11px;font-weight:400;color:#000;line-height:12px;">480</div>
<div style="position:absolute;left:852px;top:853px;width:4px;height:1px;background:#000;"></div>
<div style="position:absolute;left:905px;top:853px;width:4px;height:1px;background:#000;"></div>
<div style="position:absolute;left:958px;top:853px;width:4px;height:1px;background:#000;"></div>
<div class="t" style="right:1111px;top:860px;font-size:11px;font-weight:400;color:#000;line-height:12px;letter-spacing:-0.3px">2014</div>
<div class="t" style="left:19px;width:300px;text-align:center;top:860px;font-size:11px;font-weight:400;color:#000;line-height:12px;">23</div>
<div class="t" style="right:964px;top:860px;font-size:11px;font-weight:400;color:#000;line-height:12px;">247</div>
<div class="t" style="right:911px;top:860px;font-size:11px;font-weight:400;color:#000;line-height:12px;">454</div>
<div class="t" style="right:858px;top:860px;font-size:11px;font-weight:400;color:#000;line-height:12px;">624</div>
<div class="t" style="right:805px;top:860px;font-size:11px;font-weight:400;color:#000;line-height:12px;">784</div>
<div class="t" style="right:752px;top:860px;font-size:11px;font-weight:400;color:#000;line-height:12px;">873</div>
<div class="t" style="right:699px;top:860px;font-size:11px;font-weight:400;color:#000;line-height:12px;">884</div>
<div class="t" style="right:646px;top:860px;font-size:11px;font-weight:400;color:#000;line-height:12px;">943</div>
<div class="t" style="right:593px;top:860px;font-size:11px;font-weight:400;color:#000;line-height:12px;">864</div>
<div class="t" style="right:540px;top:860px;font-size:11px;font-weight:400;color:#000;line-height:12px;">886</div>
<div class="t" style="right:487px;top:860px;font-size:11px;font-weight:400;color:#000;line-height:12px;">310</div>
<div style="position:absolute;left:799px;top:866px;width:4px;height:1px;background:#000;"></div>
<div style="position:absolute;left:852px;top:866px;width:4px;height:1px;background:#000;"></div>
<div style="position:absolute;left:905px;top:866px;width:4px;height:1px;background:#000;"></div>
<div style="position:absolute;left:958px;top:866px;width:4px;height:1px;background:#000;"></div>
<div class="t" style="right:1111px;top:873px;font-size:11px;font-weight:400;color:#000;line-height:12px;letter-spacing:-0.3px">2015</div>
<div class="t" style="left:19px;width:300px;text-align:center;top:873px;font-size:11px;font-weight:400;color:#000;line-height:12px;">17</div>
<div class="t" style="right:964px;top:873px;font-size:11px;font-weight:400;color:#000;line-height:12px;">339</div>
<div class="t" style="right:911px;top:873px;font-size:11px;font-weight:400;color:#000;line-height:12px;">719</div>
<div class="t" style="right:858px;top:873px;font-size:11px;font-weight:400;color:#000;line-height:12px;">968</div>
<div class="t" style="right:805px;top:873px;font-size:11px;font-weight:400;color:#000;line-height:12px;">1,038</div>
<div class="t" style="right:752px;top:873px;font-size:11px;font-weight:400;color:#000;line-height:12px;">1,098</div>
<div class="t" style="right:699px;top:873px;font-size:11px;font-weight:400;color:#000;line-height:12px;">1,290</div>
<div class="t" style="right:646px;top:873px;font-size:11px;font-weight:400;color:#000;line-height:12px;">1,226</div>
<div class="t" style="right:593px;top:873px;font-size:11px;font-weight:400;color:#000;line-height:12px;">1,245</div>
<div class="t" style="right:540px;top:873px;font-size:11px;font-weight:400;color:#000;line-height:12px;">297</div>
<div style="position:absolute;left:746px;top:879px;width:4px;height:1px;background:#000;"></div>
<div style="position:absolute;left:799px;top:879px;width:4px;height:1px;background:#000;"></div>
<div style="position:absolute;left:852px;top:879px;width:4px;height:1px;background:#000;"></div>
<div style="position:absolute;left:905px;top:879px;width:4px;height:1px;background:#000;"></div>
<div style="position:absolute;left:958px;top:879px;width:4px;height:1px;background:#000;"></div>
<div class="t" style="right:1111px;top:886px;font-size:11px;font-weight:400;color:#000;line-height:12px;letter-spacing:-0.3px">2016</div>
<div class="t" style="left:19px;width:300px;text-align:center;top:886px;font-size:11px;font-weight:400;color:#000;line-height:12px;">16</div>
<div class="t" style="right:964px;top:886px;font-size:11px;font-weight:400;color:#000;line-height:12px;">193</div>
<div class="t" style="right:911px;top:886px;font-size:11px;font-weight:400;color:#000;line-height:12px;">429</div>
<div class="t" style="right:858px;top:886px;font-size:11px;font-weight:400;color:#000;line-height:12px;">571</div>
<div class="t" style="right:805px;top:886px;font-size:11px;font-weight:400;color:#000;line-height:12px;">742</div>
<div class="t" style="right:752px;top:886px;font-size:11px;font-weight:400;color:#000;line-height:12px;">860</div>
<div class="t" style="right:699px;top:886px;font-size:11px;font-weight:400;color:#000;line-height:12px;">908</div>
<div class="t" style="right:646px;top:886px;font-size:11px;font-weight:400;color:#000;line-height:12px;">926</div>
<div class="t" style="right:593px;top:886px;font-size:11px;font-weight:400;color:#000;line-height:12px;">237</div>
<div style="position:absolute;left:693px;top:892px;width:4px;height:1px;background:#000;"></div>
<div style="position:absolute;left:746px;top:892px;width:4px;height:1px;background:#000;"></div>
<div style="position:absolute;left:799px;top:892px;width:4px;height:1px;background:#000;"></div>
<div style="position:absolute;left:852px;top:892px;width:4px;height:1px;background:#000;"></div>
<div style="position:absolute;left:905px;top:892px;width:4px;height:1px;background:#000;"></div>
<div style="position:absolute;left:958px;top:892px;width:4px;height:1px;background:#000;"></div>
<div class="t" style="right:1111px;top:899px;font-size:11px;font-weight:400;color:#000;line-height:12px;letter-spacing:-0.3px">2017</div>
<div class="t" style="left:19px;width:300px;text-align:center;top:899px;font-size:11px;font-weight:400;color:#000;line-height:12px;">19</div>
<div class="t" style="right:964px;top:899px;font-size:11px;font-weight:400;color:#000;line-height:12px;">289</div>
<div class="t" style="right:911px;top:899px;font-size:11px;font-weight:400;color:#000;line-height:12px;">462</div>
<div class="t" style="right:858px;top:899px;font-size:11px;font-weight:400;color:#000;line-height:12px;">548</div>
<div class="t" style="right:805px;top:899px;font-size:11px;font-weight:400;color:#000;line-height:12px;">689</div>
<div class="t" style="right:752px;top:899px;font-size:11px;font-weight:400;color:#000;line-height:12px;">720</div>
<div class="t" style="right:699px;top:899px;font-size:11px;font-weight:400;color:#000;line-height:12px;">814</div>
<div class="t" style="right:646px;top:899px;font-size:11px;font-weight:400;color:#000;line-height:12px;">203</div>
<div style="position:absolute;left:640px;top:905px;width:4px;height:1px;background:#000;"></div>
<div style="position:absolute;left:693px;top:905px;width:4px;height:1px;background:#000;"></div>
<div style="position:absolute;left:746px;top:905px;width:4px;height:1px;background:#000;"></div>
<div style="position:absolute;left:799px;top:905px;width:4px;height:1px;background:#000;"></div>
<div style="position:absolute;left:852px;top:905px;width:4px;height:1px;background:#000;"></div>
<div style="position:absolute;left:905px;top:905px;width:4px;height:1px;background:#000;"></div>
<div style="position:absolute;left:958px;top:905px;width:4px;height:1px;background:#000;"></div>
<div class="t" style="right:1111px;top:912px;font-size:11px;font-weight:400;color:#000;line-height:12px;letter-spacing:-0.3px">2018</div>
<div class="t" style="left:19px;width:300px;text-align:center;top:912px;font-size:11px;font-weight:400;color:#000;line-height:12px;">15</div>
<div class="t" style="right:964px;top:912px;font-size:11px;font-weight:400;color:#000;line-height:12px;">192</div>
<div class="t" style="right:911px;top:912px;font-size:11px;font-weight:400;color:#000;line-height:12px;">367</div>
<div class="t" style="right:858px;top:912px;font-size:11px;font-weight:400;color:#000;line-height:12px;">529</div>
<div class="t" style="right:805px;top:912px;font-size:11px;font-weight:400;color:#000;line-height:12px;">646</div>
<div class="t" style="right:752px;top:912px;font-size:11px;font-weight:400;color:#000;line-height:12px;">720</div>
<div class="t" style="right:699px;top:912px;font-size:11px;font-weight:400;color:#000;line-height:12px;">283</div>
<div style="position:absolute;left:587px;top:918px;width:4px;height:1px;background:#000;"></div>
<div style="position:absolute;left:640px;top:918px;width:4px;height:1px;background:#000;"></div>
<div style="position:absolute;left:693px;top:918px;width:4px;height:1px;background:#000;"></div>
<div style="position:absolute;left:746px;top:918px;width:4px;height:1px;background:#000;"></div>
<div style="position:absolute;left:799px;top:918px;width:4px;height:1px;background:#000;"></div>
<div style="position:absolute;left:852px;top:918px;width:4px;height:1px;background:#000;"></div>
<div style="position:absolute;left:905px;top:918px;width:4px;height:1px;background:#000;"></div>
<div style="position:absolute;left:958px;top:918px;width:4px;height:1px;background:#000;"></div>
<div class="t" style="right:1111px;top:925px;font-size:11px;font-weight:400;color:#000;line-height:12px;letter-spacing:-0.3px">2019</div>
<div class="t" style="left:19px;width:300px;text-align:center;top:925px;font-size:11px;font-weight:400;color:#000;line-height:12px;">13</div>
<div class="t" style="right:964px;top:925px;font-size:11px;font-weight:400;color:#000;line-height:12px;">172</div>
<div class="t" style="right:911px;top:925px;font-size:11px;font-weight:400;color:#000;line-height:12px;">312</div>
<div class="t" style="right:858px;top:925px;font-size:11px;font-weight:400;color:#000;line-height:12px;">387</div>
<div class="t" style="right:805px;top:925px;font-size:11px;font-weight:400;color:#000;line-height:12px;">451</div>
<div class="t" style="right:752px;top:925px;font-size:11px;font-weight:400;color:#000;line-height:12px;">83</div>
<div style="position:absolute;left:534px;top:931px;width:4px;height:1px;background:#000;"></div>
<div style="position:absolute;left:587px;top:931px;width:4px;height:1px;background:#000;"></div>
<div style="position:absolute;left:640px;top:931px;width:4px;height:1px;background:#000;"></div>
<div style="position:absolute;left:693px;top:931px;width:4px;height:1px;background:#000;"></div>
<div style="position:absolute;left:746px;top:931px;width:4px;height:1px;background:#000;"></div>
<div style="position:absolute;left:799px;top:931px;width:4px;height:1px;background:#000;"></div>
<div style="position:absolute;left:852px;top:931px;width:4px;height:1px;background:#000;"></div>
<div style="position:absolute;left:905px;top:931px;width:4px;height:1px;background:#000;"></div>
<div style="position:absolute;left:958px;top:931px;width:4px;height:1px;background:#000;"></div>
<div class="t" style="right:1111px;top:938px;font-size:11px;font-weight:400;color:#000;line-height:12px;letter-spacing:-0.3px">2020</div>
<div class="t" style="left:19px;width:300px;text-align:center;top:938px;font-size:11px;font-weight:400;color:#000;line-height:12px;">16</div>
<div class="t" style="right:964px;top:938px;font-size:11px;font-weight:400;color:#000;line-height:12px;">256</div>
<div class="t" style="right:911px;top:938px;font-size:11px;font-weight:400;color:#000;line-height:12px;">395</div>
<div class="t" style="right:858px;top:938px;font-size:11px;font-weight:400;color:#000;line-height:12px;">530</div>
<div class="t" style="right:805px;top:938px;font-size:11px;font-weight:400;color:#000;line-height:12px;">161</div>
<div style="position:absolute;left:481px;top:944px;width:4px;height:1px;background:#000;"></div>
<div style="position:absolute;left:534px;top:944px;width:4px;height:1px;background:#000;"></div>
<div style="position:absolute;left:587px;top:944px;width:4px;height:1px;background:#000;"></div>
<div style="position:absolute;left:640px;top:944px;width:4px;height:1px;background:#000;"></div>
<div style="position:absolute;left:693px;top:944px;width:4px;height:1px;background:#000;"></div>
<div style="position:absolute;left:746px;top:944px;width:4px;height:1px;background:#000;"></div>
<div style="position:absolute;left:799px;top:944px;width:4px;height:1px;background:#000;"></div>
<div style="position:absolute;left:852px;top:944px;width:4px;height:1px;background:#000;"></div>
<div style="position:absolute;left:905px;top:944px;width:4px;height:1px;background:#000;"></div>
<div style="position:absolute;left:958px;top:944px;width:4px;height:1px;background:#000;"></div>
<div class="t" style="right:1111px;top:951px;font-size:11px;font-weight:400;color:#000;line-height:12px;letter-spacing:-0.3px">2021</div>
<div class="t" style="left:19px;width:300px;text-align:center;top:951px;font-size:11px;font-weight:400;color:#000;line-height:12px;">15</div>
<div class="t" style="right:964px;top:951px;font-size:11px;font-weight:400;color:#000;line-height:12px;">259</div>
<div class="t" style="right:911px;top:951px;font-size:11px;font-weight:400;color:#000;line-height:12px;">522</div>
<div class="t" style="right:858px;top:951px;font-size:11px;font-weight:400;color:#000;line-height:12px;">292</div>
<div style="position:absolute;left:428px;top:957px;width:4px;height:1px;background:#000;"></div>
<div style="position:absolute;left:481px;top:957px;width:4px;height:1px;background:#000;"></div>
<div style="position:absolute;left:534px;top:957px;width:4px;height:1px;background:#000;"></div>
<div style="position:absolute;left:587px;top:957px;width:4px;height:1px;background:#000;"></div>
<div style="position:absolute;left:640px;top:957px;width:4px;height:1px;background:#000;"></div>
<div style="position:absolute;left:693px;top:957px;width:4px;height:1px;background:#000;"></div>
<div style="position:absolute;left:746px;top:957px;width:4px;height:1px;background:#000;"></div>
<div style="position:absolute;left:799px;top:957px;width:4px;height:1px;background:#000;"></div>
<div style="position:absolute;left:852px;top:957px;width:4px;height:1px;background:#000;"></div>
<div style="position:absolute;left:905px;top:957px;width:4px;height:1px;background:#000;"></div>
<div style="position:absolute;left:958px;top:957px;width:4px;height:1px;background:#000;"></div>
<div class="t" style="right:1111px;top:964px;font-size:11px;font-weight:400;color:#000;line-height:12px;letter-spacing:-0.3px">2022</div>
<div class="t" style="left:19px;width:300px;text-align:center;top:964px;font-size:11px;font-weight:400;color:#000;line-height:12px;">2</div>
<div class="t" style="right:964px;top:964px;font-size:11px;font-weight:400;color:#000;line-height:12px;">10</div>
<div class="t" style="right:911px;top:964px;font-size:11px;font-weight:400;color:#000;line-height:12px;">170</div>
<div style="position:absolute;left:375px;top:970px;width:4px;height:1px;background:#000;"></div>
<div style="position:absolute;left:428px;top:970px;width:4px;height:1px;background:#000;"></div>
<div style="position:absolute;left:481px;top:970px;width:4px;height:1px;background:#000;"></div>
<div style="position:absolute;left:534px;top:970px;width:4px;height:1px;background:#000;"></div>
<div style="position:absolute;left:587px;top:970px;width:4px;height:1px;background:#000;"></div>
<div style="position:absolute;left:640px;top:970px;width:4px;height:1px;background:#000;"></div>
<div style="position:absolute;left:693px;top:970px;width:4px;height:1px;background:#000;"></div>
<div style="position:absolute;left:746px;top:970px;width:4px;height:1px;background:#000;"></div>
<div style="position:absolute;left:799px;top:970px;width:4px;height:1px;background:#000;"></div>
<div style="position:absolute;left:852px;top:970px;width:4px;height:1px;background:#000;"></div>
<div style="position:absolute;left:905px;top:970px;width:4px;height:1px;background:#000;"></div>
<div style="position:absolute;left:958px;top:970px;width:4px;height:1px;background:#000;"></div>
<div style="position:absolute;left:236px;top:970px;width:5px;height:1px;background:#000;"></div>
<div class="t" style="right:1111px;top:977px;font-size:11px;font-weight:400;color:#000;line-height:12px;letter-spacing:-0.3px">2023</div>
<div class="t" style="left:19px;width:300px;text-align:center;top:977px;font-size:11px;font-weight:400;color:#000;line-height:12px;">3</div>
<div class="t" style="right:964px;top:977px;font-size:11px;font-weight:400;color:#000;line-height:12px;">22</div>
<div style="position:absolute;left:322px;top:983px;width:4px;height:1px;background:#000;"></div>
<div style="position:absolute;left:375px;top:983px;width:4px;height:1px;background:#000;"></div>
<div style="position:absolute;left:428px;top:983px;width:4px;height:1px;background:#000;"></div>
<div style="position:absolute;left:481px;top:983px;width:4px;height:1px;background:#000;"></div>
<div style="position:absolute;left:534px;top:983px;width:4px;height:1px;background:#000;"></div>
<div style="position:absolute;left:587px;top:983px;width:4px;height:1px;background:#000;"></div>
<div style="position:absolute;left:640px;top:983px;width:4px;height:1px;background:#000;"></div>
<div style="position:absolute;left:693px;top:983px;width:4px;height:1px;background:#000;"></div>
<div style="position:absolute;left:746px;top:983px;width:4px;height:1px;background:#000;"></div>
<div style="position:absolute;left:799px;top:983px;width:4px;height:1px;background:#000;"></div>
<div style="position:absolute;left:852px;top:983px;width:4px;height:1px;background:#000;"></div>
<div style="position:absolute;left:905px;top:983px;width:4px;height:1px;background:#000;"></div>
<div style="position:absolute;left:958px;top:983px;width:4px;height:1px;background:#000;"></div>
<div style="position:absolute;left:236px;top:983px;width:5px;height:1px;background:#000;"></div>
<div style="position:absolute;left:92px;top:989px;width:883px;height:14px;background:#e4e4e4;"></div>
<div class="t" style="left:95px;top:990px;font-size:11.5px;font-weight:700;color:#000;line-height:12px;">Average</div>
<div class="t" style="right:964px;top:990px;font-size:11px;font-weight:700;color:#000;line-height:12px;">243</div>
<div class="t" style="right:911px;top:990px;font-size:11px;font-weight:700;color:#000;line-height:12px;">441</div>
<div class="t" style="right:858px;top:990px;font-size:11px;font-weight:700;color:#000;line-height:12px;">664</div>
<div class="t" style="right:805px;top:990px;font-size:11px;font-weight:700;color:#000;line-height:12px;">798</div>
<div class="t" style="right:752px;top:990px;font-size:11px;font-weight:700;color:#000;line-height:12px;">901</div>
<div class="t" style="right:699px;top:990px;font-size:11px;font-weight:700;color:#000;line-height:12px;">1,031</div>
<div class="t" style="right:646px;top:990px;font-size:11px;font-weight:700;color:#000;line-height:12px;">1,098</div>
<div class="t" style="right:593px;top:990px;font-size:11px;font-weight:700;color:#000;line-height:12px;">1,177</div>
<div class="t" style="right:540px;top:990px;font-size:11px;font-weight:700;color:#000;line-height:12px;">1,270</div>
<div class="t" style="right:487px;top:990px;font-size:11px;font-weight:700;color:#000;line-height:12px;">1,382</div>
<div class="t" style="right:434px;top:990px;font-size:11px;font-weight:700;color:#000;line-height:12px;">1,360</div>
<div style="position:absolute;left:92px;top:1015px;width:1150px;height:14px;background:#e6e6e6;"></div>
<div class="t" style="left:95px;top:1016px;font-size:11.6px;font-weight:700;color:#000;line-height:12px;">SSS Growth</div>
<svg style="left:82px;top:1021px" width="5" height="5" viewBox="0 0 5 5"><rect x="0" y="0" width="1.2" height="1.8" fill="#000"/><rect x="3.3" y="0" width="1.2" height="1.8" fill="#000"/><rect x="0.9" y="1.8" width="2.7" height="1.3" fill="#000"/><rect x="0" y="3.1" width="1.2" height="1.9" fill="#000"/><rect x="3.3" y="3.1" width="1.2" height="1.9" fill="#000"/></svg>
<div style="position:absolute;left:92px;top:1054px;width:141px;height:212px;background:#e4e4e4;"></div>
<div style="position:absolute;left:92px;top:1041px;width:883px;height:13px;background:#6fa9d0;"></div>
<div class="t" style="right:1014px;top:1042px;font-size:11.5px;font-weight:700;color:#fff;line-height:12px;">Year</div>
<div class="t" style="right:964px;top:1042px;font-size:11px;font-weight:700;color:#fff;line-height:12px;">1</div>
<div class="t" style="right:911px;top:1042px;font-size:11px;font-weight:700;color:#fff;line-height:12px;">2</div>
<div class="t" style="right:858px;top:1042px;font-size:11px;font-weight:700;color:#fff;line-height:12px;">3</div>
<div class="t" style="right:805px;top:1042px;font-size:11px;font-weight:700;color:#fff;line-height:12px;">4</div>
<div class="t" style="right:752px;top:1042px;font-size:11px;font-weight:700;color:#fff;line-height:12px;">5</div>
<div class="t" style="right:699px;top:1042px;font-size:11px;font-weight:700;color:#fff;line-height:12px;">6</div>
<div class="t" style="right:646px;top:1042px;font-size:11px;font-weight:700;color:#fff;line-height:12px;">7</div>
<div class="t" style="right:593px;top:1042px;font-size:11px;font-weight:700;color:#fff;line-height:12px;">8</div>
<div class="t" style="right:540px;top:1042px;font-size:11px;font-weight:700;color:#fff;line-height:12px;">9</div>
<div class="t" style="right:487px;top:1042px;font-size:11px;font-weight:700;color:#fff;line-height:12px;">10</div>
<div class="t" style="right:434px;top:1042px;font-size:11px;font-weight:700;color:#fff;line-height:12px;">11</div>
<div class="t" style="right:381px;top:1042px;font-size:11px;font-weight:700;color:#fff;line-height:12px;">12</div>
<div class="t" style="right:328px;top:1042px;font-size:11px;font-weight:700;color:#fff;line-height:12px;">13</div>
<div class="t" style="right:275px;top:1042px;font-size:11px;font-weight:700;color:#fff;line-height:12px;">14</div>
<div class="t" style="left:-32px;width:300px;text-align:center;top:1053px;font-size:11.6px;font-weight:700;color:#000;line-height:14px;">Openin</div>
<div class="t" style="left:-32px;width:300px;text-align:center;top:1069px;font-size:11.6px;font-weight:700;color:#000;line-height:13px;">g Year</div>
<div class="t" style="left:18px;width:300px;text-align:center;top:1053px;font-size:11.6px;font-weight:700;color:#000;line-height:14px;">Store</div>
<div class="t" style="left:18px;width:300px;text-align:center;top:1069px;font-size:11.6px;font-weight:700;color:#000;line-height:13px;">Count</div>
<div style="position:absolute;left:96px;top:1081px;width:46px;height:1px;background:#000;"></div>
<div style="position:absolute;left:147px;top:1081px;width:42px;height:1px;background:#000;"></div>
<div class="t" style="right:1111px;top:1084px;font-size:11px;font-weight:400;color:#000;line-height:12px;letter-spacing:-0.3px">2010</div>
<div class="t" style="left:19px;width:300px;text-align:center;top:1084px;font-size:11px;font-weight:400;color:#000;line-height:12px;">6</div>
<div class="t" style="right:1111px;top:1097px;font-size:11px;font-weight:400;color:#000;line-height:12px;letter-spacing:-0.3px">2011</div>
<div class="t" style="left:19px;width:300px;text-align:center;top:1097px;font-size:11px;font-weight:400;color:#000;line-height:12px;">9</div>
<div class="t" style="right:1111px;top:1110px;font-size:11px;font-weight:400;color:#000;line-height:12px;letter-spacing:-0.3px">2012</div>
<div class="t" style="left:19px;width:300px;text-align:center;top:1110px;font-size:11px;font-weight:400;color:#000;line-height:12px;">10</div>
<div class="t" style="right:1111px;top:1123px;font-size:11px;font-weight:400;color:#000;line-height:12px;letter-spacing:-0.3px">2013</div>
<div class="t" style="left:19px;width:300px;text-align:center;top:1123px;font-size:11px;font-weight:400;color:#000;line-height:12px;">20</div>
<div class="t" style="right:1111px;top:1136px;font-size:11px;font-weight:400;color:#000;line-height:12px;letter-spacing:-0.3px">2014</div>
<div class="t" style="left:19px;width:300px;text-align:center;top:1136px;font-size:11px;font-weight:400;color:#000;line-height:12px;">23</div>
<div class="t" style="right:1111px;top:1149px;font-size:11px;font-weight:400;color:#000;line-height:12px;letter-spacing:-0.3px">2015</div>
<div class="t" style="left:19px;width:300px;text-align:center;top:1149px;font-size:11px;font-weight:400;color:#000;line-height:12px;">17</div>
<div class="t" style="right:1111px;top:1162px;font-size:11px;font-weight:400;color:#000;line-height:12px;letter-spacing:-0.3px">2016</div>
<div class="t" style="left:19px;width:300px;text-align:center;top:1162px;font-size:11px;font-weight:400;color:#000;line-height:12px;">16</div>
<div class="t" style="right:1111px;top:1175px;font-size:11px;font-weight:400;color:#000;line-height:12px;letter-spacing:-0.3px">2017</div>
<div class="t" style="left:19px;width:300px;text-align:center;top:1175px;font-size:11px;font-weight:400;color:#000;line-height:12px;">19</div>
<div class="t" style="right:1111px;top:1188px;font-size:11px;font-weight:400;color:#000;line-height:12px;letter-spacing:-0.3px">2018</div>
<div class="t" style="left:19px;width:300px;text-align:center;top:1188px;font-size:11px;font-weight:400;color:#000;line-height:12px;">15</div>
<div class="t" style="right:1111px;top:1201px;font-size:11px;font-weight:400;color:#000;line-height:12px;letter-spacing:-0.3px">2019</div>
<div class="t" style="left:19px;width:300px;text-align:center;top:1201px;font-size:11px;font-weight:400;color:#000;line-height:12px;">13</div>
<div class="t" style="right:1111px;top:1214px;font-size:11px;font-weight:400;color:#000;line-height:12px;letter-spacing:-0.3px">2020</div>
<div class="t" style="left:19px;width:300px;text-align:center;top:1214px;font-size:11px;font-weight:400;color:#000;line-height:12px;">16</div>
<div class="t" style="right:1111px;top:1227px;font-size:11px;font-weight:400;color:#000;line-height:12px;letter-spacing:-0.3px">2021</div>
<div class="t" style="left:19px;width:300px;text-align:center;top:1227px;font-size:11px;font-weight:400;color:#000;line-height:12px;">15</div>
<div class="t" style="right:1111px;top:1240px;font-size:11px;font-weight:400;color:#000;line-height:12px;letter-spacing:-0.3px">2022</div>
<div class="t" style="left:19px;width:300px;text-align:center;top:1240px;font-size:11px;font-weight:400;color:#000;line-height:12px;">2</div>
<div class="t" style="right:1111px;top:1253px;font-size:11px;font-weight:400;color:#000;line-height:12px;letter-spacing:-0.3px">2023</div>
<div class="t" style="left:19px;width:300px;text-align:center;top:1253px;font-size:11px;font-weight:400;color:#000;line-height:12px;">3</div>
<div style="position:absolute;left:332px;top:1090px;width:4px;height:1px;background:#000;"></div>
<div style="position:absolute;left:385px;top:1090px;width:4px;height:1px;background:#000;"></div>
<div style="position:absolute;left:438px;top:1090px;width:4px;height:1px;background:#000;"></div>
<div style="position:absolute;left:491px;top:1090px;width:4px;height:1px;background:#000;"></div>
<div style="position:absolute;left:497px;top:1083px;width:53px;height:14px;background:#e0e282;"></div>
<div class="t" style="right:695px;top:1084px;font-size:11px;font-weight:400;color:#000;line-height:12px;letter-spacing:-0.5px">2.6%</div>
<div style="position:absolute;left:550px;top:1083px;width:53px;height:14px;background:#b1d480;"></div>
<div class="t" style="right:642px;top:1084px;font-size:11px;font-weight:400;color:#000;line-height:12px;letter-spacing:-0.5px">9.1%</div>
<div style="position:absolute;left:603px;top:1083px;width:53px;height:14px;background:#63be7b;"></div>
<div class="t" style="right:589px;top:1084px;font-size:11px;font-weight:400;color:#000;line-height:12px;letter-spacing:-0.5px">21.7%</div>
<div style="position:absolute;left:656px;top:1083px;width:53px;height:14px;background:#f9e984;"></div>
<div class="t" style="right:536px;top:1084px;font-size:11px;font-weight:400;color:#000;line-height:12px;letter-spacing:-0.5px">1.2%</div>
<div style="position:absolute;left:709px;top:1083px;width:53px;height:14px;background:#ffeb84;"></div>
<div class="t" style="right:483px;top:1084px;font-size:11px;font-weight:400;color:#000;line-height:12px;letter-spacing:-0.5px">-0.6%</div>
<div style="position:absolute;left:762px;top:1083px;width:53px;height:14px;background:#e0e282;"></div>
<div class="t" style="right:430px;top:1084px;font-size:11px;font-weight:400;color:#000;line-height:12px;letter-spacing:-0.5px">3.0%</div>
<div style="position:absolute;left:815px;top:1083px;width:53px;height:14px;background:#92cc7e;"></div>
<div class="t" style="right:377px;top:1084px;font-size:11px;font-weight:400;color:#000;line-height:12px;letter-spacing:-0.5px">14.4%</div>
<div style="position:absolute;left:868px;top:1083px;width:53px;height:14px;background:#e0e282;"></div>
<div class="t" style="right:324px;top:1084px;font-size:11px;font-weight:400;color:#000;line-height:12px;letter-spacing:-0.5px">3.7%</div>
<div style="position:absolute;left:332px;top:1103px;width:4px;height:1px;background:#000;"></div>
<div style="position:absolute;left:385px;top:1103px;width:4px;height:1px;background:#000;"></div>
<div style="position:absolute;left:438px;top:1103px;width:4px;height:1px;background:#000;"></div>
<div style="position:absolute;left:444px;top:1096px;width:53px;height:14px;background:#63be7b;"></div>
<div class="t" style="right:748px;top:1097px;font-size:11px;font-weight:400;color:#000;line-height:12px;letter-spacing:-0.5px">15.5%</div>
<div style="position:absolute;left:497px;top:1096px;width:53px;height:14px;background:#8ac97d;"></div>
<div class="t" style="right:695px;top:1097px;font-size:11px;font-weight:400;color:#000;line-height:12px;letter-spacing:-0.5px">12.5%</div>
<div style="position:absolute;left:550px;top:1096px;width:53px;height:14px;background:#b1d480;"></div>
<div class="t" style="right:642px;top:1097px;font-size:11px;font-weight:400;color:#000;line-height:12px;letter-spacing:-0.5px">8.7%</div>
<div style="position:absolute;left:603px;top:1096px;width:53px;height:14px;background:#bdd880;"></div>
<div class="t" style="right:589px;top:1097px;font-size:11px;font-weight:400;color:#000;line-height:12px;letter-spacing:-0.5px">7.7%</div>
<div style="position:absolute;left:656px;top:1096px;width:53px;height:14px;background:#9ace7e;"></div>
<div class="t" style="right:536px;top:1097px;font-size:11px;font-weight:400;color:#000;line-height:12px;letter-spacing:-0.5px">10.1%</div>
<div style="position:absolute;left:709px;top:1096px;width:53px;height:14px;background:#b9d780;"></div>
<div class="t" style="right:483px;top:1097px;font-size:11px;font-weight:400;color:#000;line-height:12px;letter-spacing:-0.5px">7.3%</div>
<div style="position:absolute;left:762px;top:1096px;width:53px;height:14px;background:#e0e282;"></div>
<div class="t" style="right:430px;top:1097px;font-size:11px;font-weight:400;color:#000;line-height:12px;letter-spacing:-0.5px">4.1%</div>
<div style="position:absolute;left:815px;top:1096px;width:53px;height:14px;background:#ffeb84;"></div>
<div class="t" style="right:377px;top:1097px;font-size:11px;font-weight:400;color:#000;line-height:12px;letter-spacing:-0.5px">2.1%</div>
<div style="position:absolute;left:332px;top:1116px;width:4px;height:1px;background:#000;"></div>
<div style="position:absolute;left:385px;top:1116px;width:4px;height:1px;background:#000;"></div>
<div style="position:absolute;left:391px;top:1109px;width:53px;height:14px;background:#77c47c;"></div>
<div class="t" style="right:801px;top:1110px;font-size:11px;font-weight:400;color:#000;line-height:12px;letter-spacing:-0.5px">16.6%</div>
<div style="position:absolute;left:444px;top:1109px;width:53px;height:14px;background:#9dcf7e;"></div>
<div class="t" style="right:748px;top:1110px;font-size:11px;font-weight:400;color:#000;line-height:12px;letter-spacing:-0.5px">9.2%</div>
<div style="position:absolute;left:497px;top:1109px;width:53px;height:14px;background:#8ac97d;"></div>
<div class="t" style="right:695px;top:1110px;font-size:11px;font-weight:400;color:#000;line-height:12px;letter-spacing:-0.5px">10.9%</div>
<div style="position:absolute;left:550px;top:1109px;width:53px;height:14px;background:#b9d780;"></div>
<div class="t" style="right:642px;top:1110px;font-size:11px;font-weight:400;color:#000;line-height:12px;letter-spacing:-0.5px">7.2%</div>
<div style="position:absolute;left:603px;top:1109px;width:53px;height:14px;background:#d8e082;"></div>
<div class="t" style="right:589px;top:1110px;font-size:11px;font-weight:400;color:#000;line-height:12px;letter-spacing:-0.5px">0.5%</div>
<div style="position:absolute;left:656px;top:1109px;width:53px;height:14px;background:#63be7b;"></div>
<div class="t" style="right:536px;top:1110px;font-size:11px;font-weight:400;color:#000;line-height:12px;letter-spacing:-0.5px">20.4%</div>
<div style="position:absolute;left:709px;top:1109px;width:53px;height:14px;background:#d8e082;"></div>
<div class="t" style="right:483px;top:1110px;font-size:11px;font-weight:400;color:#000;line-height:12px;letter-spacing:-0.5px">0.3%</div>
<div style="position:absolute;left:762px;top:1109px;width:53px;height:14px;background:#ffeb84;"></div>
<div class="t" style="right:430px;top:1110px;font-size:11px;font-weight:400;color:#000;line-height:12px;letter-spacing:-0.5px">-6.6%</div>
<div style="position:absolute;left:332px;top:1129px;width:4px;height:1px;background:#000;"></div>
<div style="position:absolute;left:338px;top:1122px;width:53px;height:14px;background:#6bc07b;"></div>
<div class="t" style="right:854px;top:1123px;font-size:11px;font-weight:400;color:#000;line-height:12px;letter-spacing:-0.5px">33.5%</div>
<div style="position:absolute;left:391px;top:1122px;width:53px;height:14px;background:#79c47c;"></div>
<div class="t" style="right:801px;top:1123px;font-size:11px;font-weight:400;color:#000;line-height:12px;letter-spacing:-0.5px">30.3%</div>
<div style="position:absolute;left:444px;top:1122px;width:53px;height:14px;background:#96cd7e;"></div>
<div class="t" style="right:748px;top:1123px;font-size:11px;font-weight:400;color:#000;line-height:12px;letter-spacing:-0.5px">18.7%</div>
<div style="position:absolute;left:497px;top:1122px;width:53px;height:14px;background:#b9d780;"></div>
<div class="t" style="right:695px;top:1123px;font-size:11px;font-weight:400;color:#000;line-height:12px;letter-spacing:-0.5px">9.7%</div>
<div style="position:absolute;left:550px;top:1122px;width:53px;height:14px;background:#c8db81;"></div>
<div class="t" style="right:642px;top:1123px;font-size:11px;font-weight:400;color:#000;line-height:12px;letter-spacing:-0.5px">6.3%</div>
<div style="position:absolute;left:603px;top:1122px;width:53px;height:14px;background:#b9d780;"></div>
<div class="t" style="right:589px;top:1123px;font-size:11px;font-weight:400;color:#000;line-height:12px;letter-spacing:-0.5px">9.7%</div>
<div style="position:absolute;left:656px;top:1122px;width:53px;height:14px;background:#ffeb84;"></div>
<div class="t" style="right:536px;top:1123px;font-size:11px;font-weight:400;color:#000;line-height:12px;letter-spacing:-0.5px">-1.8%</div>
<div style="position:absolute;left:709px;top:1122px;width:53px;height:14px;background:#e0e282;"></div>
<div class="t" style="right:483px;top:1123px;font-size:11px;font-weight:400;color:#000;line-height:12px;letter-spacing:-0.5px">3.9%</div>
<div style="position:absolute;left:285px;top:1135px;width:53px;height:14px;background:#63be7b;"></div>
<div class="t" style="right:907px;top:1136px;font-size:11px;font-weight:400;color:#000;line-height:12px;letter-spacing:-0.5px">84.1%</div>
<div style="position:absolute;left:338px;top:1135px;width:53px;height:14px;background:#aed47f;"></div>
<div class="t" style="right:854px;top:1136px;font-size:11px;font-weight:400;color:#000;line-height:12px;letter-spacing:-0.5px">37.4%</div>
<div style="position:absolute;left:391px;top:1135px;width:53px;height:14px;background:#b1d480;"></div>
<div class="t" style="right:801px;top:1136px;font-size:11px;font-weight:400;color:#000;line-height:12px;letter-spacing:-0.5px">25.6%</div>
<div style="position:absolute;left:444px;top:1135px;width:53px;height:14px;background:#dde182;"></div>
<div class="t" style="right:748px;top:1136px;font-size:11px;font-weight:400;color:#000;line-height:12px;letter-spacing:-0.5px">11.5%</div>
<div style="position:absolute;left:497px;top:1135px;width:53px;height:14px;background:#f7e984;"></div>
<div class="t" style="right:695px;top:1136px;font-size:11px;font-weight:400;color:#000;line-height:12px;letter-spacing:-0.5px">1.2%</div>
<div style="position:absolute;left:550px;top:1135px;width:53px;height:14px;background:#e8e483;"></div>
<div class="t" style="right:642px;top:1136px;font-size:11px;font-weight:400;color:#000;line-height:12px;letter-spacing:-0.5px">6.6%</div>
<div style="position:absolute;left:603px;top:1135px;width:53px;height:14px;background:#ffeb84;"></div>
<div class="t" style="right:589px;top:1136px;font-size:11px;font-weight:400;color:#000;line-height:12px;letter-spacing:-0.5px">-8.3%</div>
<div style="position:absolute;left:656px;top:1135px;width:53px;height:14px;background:#e4e382;"></div>
<div class="t" style="right:536px;top:1136px;font-size:11px;font-weight:400;color:#000;line-height:12px;letter-spacing:-0.5px">2.5%</div>
<div style="position:absolute;left:285px;top:1148px;width:53px;height:14px;background:#63be7b;"></div>
<div class="t" style="right:907px;top:1149px;font-size:11px;font-weight:400;color:#000;line-height:12px;letter-spacing:-0.5px">111.9%</div>
<div style="position:absolute;left:338px;top:1148px;width:53px;height:14px;background:#c8db81;"></div>
<div class="t" style="right:854px;top:1149px;font-size:11px;font-weight:400;color:#000;line-height:12px;letter-spacing:-0.5px">34.7%</div>
<div style="position:absolute;left:391px;top:1148px;width:53px;height:14px;background:#efe683;"></div>
<div class="t" style="right:801px;top:1149px;font-size:11px;font-weight:400;color:#000;line-height:12px;letter-spacing:-0.5px">7.2%</div>
<div style="position:absolute;left:444px;top:1148px;width:53px;height:14px;background:#efe683;"></div>
<div class="t" style="right:748px;top:1149px;font-size:11px;font-weight:400;color:#000;line-height:12px;letter-spacing:-0.5px">5.8%</div>
<div style="position:absolute;left:497px;top:1148px;width:53px;height:14px;background:#c8db81;"></div>
<div class="t" style="right:695px;top:1149px;font-size:11px;font-weight:400;color:#000;line-height:12px;letter-spacing:-0.5px">17.5%</div>
<div style="position:absolute;left:550px;top:1148px;width:53px;height:14px;background:#ffeb84;"></div>
<div class="t" style="right:642px;top:1149px;font-size:11px;font-weight:400;color:#000;line-height:12px;letter-spacing:-0.5px">-5.0%</div>
<div style="position:absolute;left:603px;top:1148px;width:53px;height:14px;background:#efe683;"></div>
<div class="t" style="right:589px;top:1149px;font-size:11px;font-weight:400;color:#000;line-height:12px;letter-spacing:-0.5px">1.5%</div>
<div style="position:absolute;left:285px;top:1161px;width:53px;height:14px;background:#63be7b;"></div>
<div class="t" style="right:907px;top:1162px;font-size:11px;font-weight:400;color:#000;line-height:12px;letter-spacing:-0.5px">123.0%</div>
<div style="position:absolute;left:338px;top:1161px;width:53px;height:14px;background:#d0de81;"></div>
<div class="t" style="right:854px;top:1162px;font-size:11px;font-weight:400;color:#000;line-height:12px;letter-spacing:-0.5px">33.0%</div>
<div style="position:absolute;left:391px;top:1161px;width:53px;height:14px;background:#d8e082;"></div>
<div class="t" style="right:801px;top:1162px;font-size:11px;font-weight:400;color:#000;line-height:12px;letter-spacing:-0.5px">29.8%</div>
<div style="position:absolute;left:444px;top:1161px;width:53px;height:14px;background:#e8e483;"></div>
<div class="t" style="right:748px;top:1162px;font-size:11px;font-weight:400;color:#000;line-height:12px;letter-spacing:-0.5px">16.0%</div>
<div style="position:absolute;left:497px;top:1161px;width:53px;height:14px;background:#faea84;"></div>
<div class="t" style="right:695px;top:1162px;font-size:11px;font-weight:400;color:#000;line-height:12px;letter-spacing:-0.5px">5.6%</div>
<div style="position:absolute;left:550px;top:1161px;width:53px;height:14px;background:#ffeb84;"></div>
<div class="t" style="right:642px;top:1162px;font-size:11px;font-weight:400;color:#000;line-height:12px;letter-spacing:-0.5px">2.0%</div>
<div style="position:absolute;left:285px;top:1174px;width:53px;height:14px;background:#63be7b;"></div>
<div class="t" style="right:907px;top:1175px;font-size:11px;font-weight:400;color:#000;line-height:12px;letter-spacing:-0.5px">59.9%</div>
<div style="position:absolute;left:338px;top:1174px;width:53px;height:14px;background:#d3de81;"></div>
<div class="t" style="right:854px;top:1175px;font-size:11px;font-weight:400;color:#000;line-height:12px;letter-spacing:-0.5px">18.8%</div>
<div style="position:absolute;left:391px;top:1174px;width:53px;height:14px;background:#b1d480;"></div>
<div class="t" style="right:801px;top:1175px;font-size:11px;font-weight:400;color:#000;line-height:12px;letter-spacing:-0.5px">25.7%</div>
<div style="position:absolute;left:444px;top:1174px;width:53px;height:14px;background:#ffeb84;"></div>
<div class="t" style="right:748px;top:1175px;font-size:11px;font-weight:400;color:#000;line-height:12px;letter-spacing:-0.5px">4.4%</div>
<div style="position:absolute;left:497px;top:1174px;width:53px;height:14px;background:#dbe182;"></div>
<div class="t" style="right:695px;top:1175px;font-size:11px;font-weight:400;color:#000;line-height:12px;letter-spacing:-0.5px">13.2%</div>
<div style="position:absolute;left:285px;top:1187px;width:53px;height:14px;background:#63be7b;"></div>
<div class="t" style="right:907px;top:1188px;font-size:11px;font-weight:400;color:#000;line-height:12px;letter-spacing:-0.5px">91.1%</div>
<div style="position:absolute;left:338px;top:1187px;width:53px;height:14px;background:#b1d480;"></div>
<div class="t" style="right:854px;top:1188px;font-size:11px;font-weight:400;color:#000;line-height:12px;letter-spacing:-0.5px">44.0%</div>
<div style="position:absolute;left:391px;top:1187px;width:53px;height:14px;background:#d5df82;"></div>
<div class="t" style="right:801px;top:1188px;font-size:11px;font-weight:400;color:#000;line-height:12px;letter-spacing:-0.5px">22.2%</div>
<div style="position:absolute;left:444px;top:1187px;width:53px;height:14px;background:#ffeb84;"></div>
<div class="t" style="right:748px;top:1188px;font-size:11px;font-weight:400;color:#000;line-height:12px;letter-spacing:-0.5px">11.5%</div>
<div style="position:absolute;left:285px;top:1200px;width:53px;height:14px;background:#63be7b;"></div>
<div class="t" style="right:907px;top:1201px;font-size:11px;font-weight:400;color:#000;line-height:12px;letter-spacing:-0.5px">81.0%</div>
<div style="position:absolute;left:338px;top:1200px;width:53px;height:14px;background:#e8e483;"></div>
<div class="t" style="right:854px;top:1201px;font-size:11px;font-weight:400;color:#000;line-height:12px;letter-spacing:-0.5px">24.3%</div>
<div style="position:absolute;left:391px;top:1200px;width:53px;height:14px;background:#faea84;"></div>
<div class="t" style="right:801px;top:1201px;font-size:11px;font-weight:400;color:#000;line-height:12px;letter-spacing:-0.5px">16.5%</div>
<div style="position:absolute;left:285px;top:1213px;width:53px;height:14px;background:#63be7b;"></div>
<div class="t" style="right:907px;top:1214px;font-size:11px;font-weight:400;color:#000;line-height:12px;letter-spacing:-0.5px">54.1%</div>
<div style="position:absolute;left:338px;top:1213px;width:53px;height:14px;background:#ffeb84;"></div>
<div class="t" style="right:854px;top:1214px;font-size:11px;font-weight:400;color:#000;line-height:12px;letter-spacing:-0.5px">34.2%</div>
<div style="position:absolute;left:285px;top:1226px;width:53px;height:14px;background:#63be7b;"></div>
<div class="t" style="right:907px;top:1227px;font-size:11px;font-weight:400;color:#000;line-height:12px;letter-spacing:-0.5px">101.2%</div>
<div style="position:absolute;left:92px;top:1265px;width:883px;height:27px;background:#e4e4e4;"></div>
<div class="t" style="left:95px;top:1266px;font-size:11.5px;font-weight:700;color:#000;line-height:12px;">Average</div>
<div class="t" style="left:95px;top:1279px;font-size:11.5px;font-weight:700;color:#000;line-height:12px;">Median</div>
<div class="t" style="right:907px;top:1266px;font-size:11px;font-weight:700;color:#000;line-height:12px;letter-spacing:-0.5px">88.3%</div>
<div class="t" style="right:907px;top:1279px;font-size:11px;font-weight:700;color:#000;line-height:12px;letter-spacing:-0.5px">87.6%</div>
<div class="t" style="right:854px;top:1266px;font-size:11px;font-weight:700;color:#000;line-height:12px;letter-spacing:-0.5px">32.5%</div>
<div class="t" style="right:854px;top:1279px;font-size:11px;font-weight:700;color:#000;line-height:12px;letter-spacing:-0.5px">33.9%</div>
<div class="t" style="right:801px;top:1266px;font-size:11px;font-weight:700;color:#000;line-height:12px;letter-spacing:-0.5px">21.7%</div>
<div class="t" style="right:801px;top:1279px;font-size:11px;font-weight:700;color:#000;line-height:12px;letter-spacing:-0.5px">23.9%</div>
<div class="t" style="right:748px;top:1266px;font-size:11px;font-weight:700;color:#000;line-height:12px;letter-spacing:-0.5px">11.6%</div>
<div class="t" style="right:748px;top:1279px;font-size:11px;font-weight:700;color:#000;line-height:12px;letter-spacing:-0.5px">11.5%</div>
<div class="t" style="right:695px;top:1266px;font-size:11px;font-weight:700;color:#000;line-height:12px;letter-spacing:-0.5px">9.1%</div>
<div class="t" style="right:695px;top:1279px;font-size:11px;font-weight:700;color:#000;line-height:12px;letter-spacing:-0.5px">10.3%</div>
<div class="t" style="right:642px;top:1266px;font-size:11px;font-weight:700;color:#000;line-height:12px;letter-spacing:-0.5px">5.0%</div>
<div class="t" style="right:642px;top:1279px;font-size:11px;font-weight:700;color:#000;line-height:12px;letter-spacing:-0.5px">6.6%</div>
<div class="t" style="right:589px;top:1266px;font-size:11px;font-weight:700;color:#000;line-height:12px;letter-spacing:-0.5px">5.4%</div>
<div class="t" style="right:589px;top:1279px;font-size:11px;font-weight:700;color:#000;line-height:12px;letter-spacing:-0.5px">4.6%</div>
<div class="t" style="right:536px;top:1266px;font-size:11px;font-weight:700;color:#000;line-height:12px;letter-spacing:-0.5px">6.5%</div>
<div class="t" style="right:536px;top:1279px;font-size:11px;font-weight:700;color:#000;line-height:12px;letter-spacing:-0.5px">2.5%</div>
<div class="t" style="right:483px;top:1266px;font-size:11px;font-weight:700;color:#000;line-height:12px;letter-spacing:-0.5px">2.7%</div>
<div class="t" style="right:483px;top:1279px;font-size:11px;font-weight:700;color:#000;line-height:12px;letter-spacing:-0.5px">2.1%</div>
<div style="position:absolute;left:4px;top:491px;width:6px;height:2px;background:#a6a6a6;"></div>
<div style="position:absolute;left:4px;top:491px;width:2px;height:235px;background:#a6a6a6;"></div>
<div style="position:absolute;left:2px;top:727px;width:9px;height:9px;border:1px solid #8d949a;background:#e8e8e8"></div>
<div style="position:absolute;left:4px;top:732px;width:7px;height:2px;background:#555;"></div>
<div style="position:absolute;left:15px;top:495px;width:2px;height:2px;background:#a0a0a0;"></div>
<div style="position:absolute;left:15px;top:508px;width:2px;height:2px;background:#a0a0a0;"></div>
<div style="position:absolute;left:15px;top:529px;width:2px;height:2px;background:#a0a0a0;"></div>
<div style="position:absolute;left:15px;top:550px;width:2px;height:2px;background:#a0a0a0;"></div>
<div style="position:absolute;left:15px;top:563px;width:2px;height:2px;background:#a0a0a0;"></div>
<div style="position:absolute;left:15px;top:576px;width:2px;height:2px;background:#a0a0a0;"></div>
<div style="position:absolute;left:15px;top:589px;width:2px;height:2px;background:#a0a0a0;"></div>
<div style="position:absolute;left:15px;top:602px;width:2px;height:2px;background:#a0a0a0;"></div>
<div style="position:absolute;left:15px;top:615px;width:2px;height:2px;background:#a0a0a0;"></div>
<div style="position:absolute;left:15px;top:628px;width:2px;height:2px;background:#a0a0a0;"></div>
<div style="position:absolute;left:15px;top:641px;width:2px;height:2px;background:#a0a0a0;"></div>
<div style="position:absolute;left:15px;top:654px;width:2px;height:2px;background:#a0a0a0;"></div>
<div style="position:absolute;left:15px;top:667px;width:2px;height:2px;background:#a0a0a0;"></div>
<div style="position:absolute;left:15px;top:680px;width:2px;height:2px;background:#a0a0a0;"></div>
<div style="position:absolute;left:15px;top:693px;width:2px;height:2px;background:#a0a0a0;"></div>
<div style="position:absolute;left:15px;top:706px;width:2px;height:2px;background:#a0a0a0;"></div>
<div style="position:absolute;left:15px;top:719px;width:2px;height:2px;background:#a0a0a0;"></div>
<div style="position:absolute;left:4px;top:754px;width:6px;height:2px;background:#a6a6a6;"></div>
<div style="position:absolute;left:4px;top:754px;width:2px;height:248px;background:#a6a6a6;"></div>
<div style="position:absolute;left:2px;top:1003px;width:9px;height:9px;border:1px solid #8d949a;background:#e8e8e8"></div>
<div style="position:absolute;left:4px;top:1008px;width:7px;height:2px;background:#555;"></div>
<div style="position:absolute;left:15px;top:758px;width:2px;height:2px;background:#a0a0a0;"></div>
<div style="position:absolute;left:15px;top:771px;width:2px;height:2px;background:#a0a0a0;"></div>
<div style="position:absolute;left:15px;top:792px;width:2px;height:2px;background:#a0a0a0;"></div>
<div style="position:absolute;left:15px;top:813px;width:2px;height:2px;background:#a0a0a0;"></div>
<div style="position:absolute;left:15px;top:826px;width:2px;height:2px;background:#a0a0a0;"></div>
<div style="position:absolute;left:15px;top:839px;width:2px;height:2px;background:#a0a0a0;"></div>
<div style="position:absolute;left:15px;top:852px;width:2px;height:2px;background:#a0a0a0;"></div>
<div style="position:absolute;left:15px;top:865px;width:2px;height:2px;background:#a0a0a0;"></div>
<div style="position:absolute;left:15px;top:878px;width:2px;height:2px;background:#a0a0a0;"></div>
<div style="position:absolute;left:15px;top:891px;width:2px;height:2px;background:#a0a0a0;"></div>
<div style="position:absolute;left:15px;top:904px;width:2px;height:2px;background:#a0a0a0;"></div>
<div style="position:absolute;left:15px;top:917px;width:2px;height:2px;background:#a0a0a0;"></div>
<div style="position:absolute;left:15px;top:930px;width:2px;height:2px;background:#a0a0a0;"></div>
<div style="position:absolute;left:15px;top:943px;width:2px;height:2px;background:#a0a0a0;"></div>
<div style="position:absolute;left:15px;top:956px;width:2px;height:2px;background:#a0a0a0;"></div>
<div style="position:absolute;left:15px;top:969px;width:2px;height:2px;background:#a0a0a0;"></div>
<div style="position:absolute;left:15px;top:982px;width:2px;height:2px;background:#a0a0a0;"></div>
<div style="position:absolute;left:15px;top:995px;width:2px;height:2px;background:#a0a0a0;"></div>
<div style="position:absolute;left:4px;top:1030px;width:6px;height:2px;background:#a6a6a6;"></div>
<div style="position:absolute;left:4px;top:1030px;width:2px;height:261px;background:#a6a6a6;"></div>
<div style="position:absolute;left:2px;top:1292px;width:9px;height:9px;border:1px solid #8d949a;background:#e8e8e8"></div>
<div style="position:absolute;left:4px;top:1297px;width:7px;height:2px;background:#555;"></div>
<div style="position:absolute;left:15px;top:1034px;width:2px;height:2px;background:#a0a0a0;"></div>
<div style="position:absolute;left:15px;top:1047px;width:2px;height:2px;background:#a0a0a0;"></div>
<div style="position:absolute;left:15px;top:1068px;width:2px;height:2px;background:#a0a0a0;"></div>
<div style="position:absolute;left:15px;top:1089px;width:2px;height:2px;background:#a0a0a0;"></div>
<div style="position:absolute;left:15px;top:1102px;width:2px;height:2px;background:#a0a0a0;"></div>
<div style="position:absolute;left:15px;top:1115px;width:2px;height:2px;background:#a0a0a0;"></div>
<div style="position:absolute;left:15px;top:1128px;width:2px;height:2px;background:#a0a0a0;"></div>
<div style="position:absolute;left:15px;top:1141px;width:2px;height:2px;background:#a0a0a0;"></div>
<div style="position:absolute;left:15px;top:1154px;width:2px;height:2px;background:#a0a0a0;"></div>
<div style="position:absolute;left:15px;top:1167px;width:2px;height:2px;background:#a0a0a0;"></div>
<div style="position:absolute;left:15px;top:1180px;width:2px;height:2px;background:#a0a0a0;"></div>
<div style="position:absolute;left:15px;top:1193px;width:2px;height:2px;background:#a0a0a0;"></div>
<div style="position:absolute;left:15px;top:1206px;width:2px;height:2px;background:#a0a0a0;"></div>
<div style="position:absolute;left:15px;top:1219px;width:2px;height:2px;background:#a0a0a0;"></div>
<div style="position:absolute;left:15px;top:1232px;width:2px;height:2px;background:#a0a0a0;"></div>
<div style="position:absolute;left:15px;top:1245px;width:2px;height:2px;background:#a0a0a0;"></div>
<div style="position:absolute;left:15px;top:1258px;width:2px;height:2px;background:#a0a0a0;"></div>
<div style="position:absolute;left:15px;top:1271px;width:2px;height:2px;background:#a0a0a0;"></div>
<div style="position:absolute;left:15px;top:1284px;width:2px;height:2px;background:#a0a0a0;"></div>
<div style="position:absolute;left:0px;top:1377px;width:1242px;height:40px;background:#efefef;"></div>
<div style="position:absolute;left:0px;top:1377px;width:1242px;height:1px;background:#dcdcdc;"></div>
<svg style="left:31px;top:1388px" width="60" height="16" viewBox="0 0 60 16" fill="none" stroke="#9a9a9a" stroke-width="1.3"><path d="M8.3 2.2 L2.5 8 L8.3 13.8"/><path d="M42 2.2 L47.8 8 L42 13.8"/></svg>
<div style="position:absolute;left:141px;top:1382px;width:66px;height:30px;border-radius:4px;background:#3d85b8"></div>
<div class="t" style="left:24px;width:300px;text-align:center;top:1388px;font-size:17px;font-weight:400;color:#fff;line-height:20px;">Cover</div>
<div style="position:absolute;left:212px;top:1385px;width:1px;height:22px;background:#c8c8c8;"></div>
<div style="position:absolute;left:217px;top:1377px;width:146px;height:36px;background:#fff;border:1px solid #d8d8d8;border-radius:6px;box-sizing:border-box"></div>
<div class="t" style="left:140px;width:300px;text-align:center;top:1384px;font-size:17.6px;font-weight:400;color:#242424;line-height:20px;-webkit-text-stroke:0.35px #242424">Cohort Analysis</div>
<div style="position:absolute;left:228px;top:1406px;width:124px;height:2px;background:#107c41;"></div>
<div style="position:absolute;left:367px;top:1385px;width:1px;height:22px;background:#c8c8c8;"></div>
<div class="t" style="left:266px;width:300px;text-align:center;top:1387px;font-size:17px;font-weight:400;color:#242424;line-height:20px;">Data Set</div>
<div style="position:absolute;left:465px;top:1385px;width:1px;height:22px;background:#c8c8c8;"></div>
<svg style="left:516px;top:1388px" width="17" height="17" viewBox="0 0 17 17" stroke="#333" stroke-width="1.4"><path d="M8.5 1 V16 M1 8.5 H16"/></svg>
<div style="position:absolute;left:0px;top:1417px;width:1242px;height:27px;background:#f3f3f3;"></div>
<div style="position:absolute;left:0px;top:1417px;width:1242px;height:1px;background:#fbfbfb;"></div>
<div class="t" style="left:9px;top:1423px;font-size:12.4px;font-weight:400;color:#424242;line-height:17px;">Ready</div>
<svg style="left:68px;top:1419px" width="22" height="24" viewBox="68 1419 22 24" fill="none" stroke="#222" stroke-width="1.2" stroke-linejoin="round" stroke-linecap="round">
<circle cx="77.7" cy="1424.9" r="2"/>
<path d="M71.3 1426.6 C70 1427.5 70.8 1429 72 1428.6 C73.5 1428.3 74.6 1428.6 75.3 1429.2 C75.7 1432 74.5 1435.5 73.2 1437.8 C72.6 1439 74 1440 74.8 1439 L77 1436.3"/>
<path d="M84.3 1426.6 C85.6 1427.5 84.8 1429 83.6 1428.6 C82 1428.4 81 1428.8 80.4 1429.4 L80.2 1430.5"/>
<path d="M79.4 1431.6 L87.6 1439.6 M87.6 1431.6 L79.4 1439.6"/></svg>
<div class="t" style="left:92px;top:1423px;font-size:12.7px;font-weight:700;color:#242424;line-height:17px;">Accessibility: Investigate</div>
<div style="position:absolute;left:0px;top:1444px;width:1242px;height:3px;background:#2a1d20;"></div>
</body></html>
